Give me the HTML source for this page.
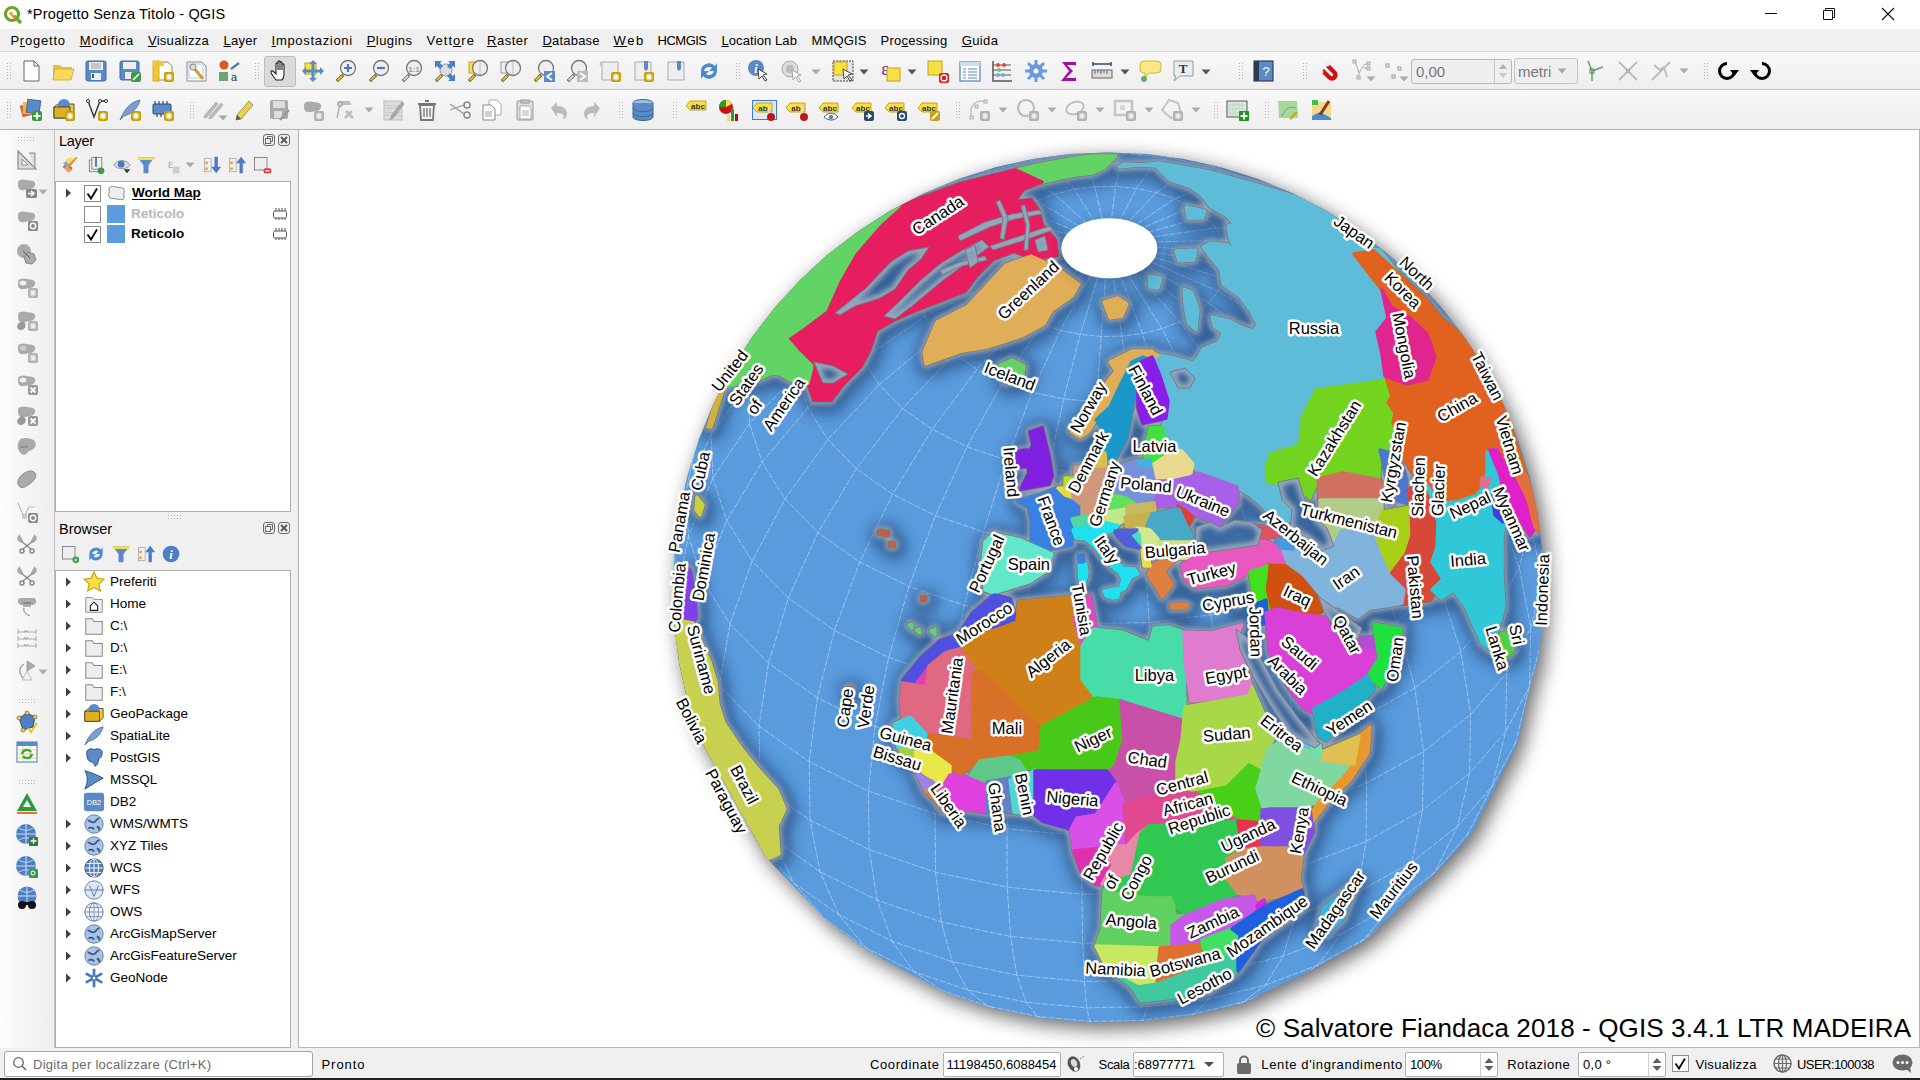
<!DOCTYPE html><html><head><meta charset="utf-8"><title>QGIS</title><style>

*{box-sizing:border-box;margin:0;padding:0}
html,body{width:1920px;height:1080px;overflow:hidden;background:#f0f0f0;font-family:"Liberation Sans", sans-serif;color:#000}
.a{position:absolute}
.t{position:absolute;white-space:nowrap;font-size:13px;line-height:1}
u{text-decoration:underline;text-underline-offset:1px}

</style></head><body>
<div class="a" style="left:0px;top:0px;width:1920px;height:29px;background:#fff"></div><svg class="a" style="left:3px;top:5px" width="20" height="20" viewBox="0 0 20 20"><circle cx="9" cy="9" r="6.5" fill="none" stroke="#6aa52a" stroke-width="3.2"/><path d="M11 11l7 7" stroke="#6aa52a" stroke-width="3.2"/><path d="M7.5 8.5l5 5" stroke="#f08a30" stroke-width="2.2"/><circle cx="8" cy="8.5" r="1.8" fill="#f0a040"/></svg><div class="t" style="left:27px;top:7.3px;font-size:14.5px;;letter-spacing:0.169px">*Progetto Senza Titolo - QGIS</div><div class="a" style="left:1765px;top:13px;width:12px;height:1px;background:#111"></div><svg class="a" style="left:1822px;top:7px" width="14" height="14"><path d="M1.5 3.5h9v9h-9z M3.5 3.5v-2h9v9h-2" fill="none" stroke="#111" stroke-width="1"/></svg><svg class="a" style="left:1881px;top:7px" width="14" height="14"><path d="M1 1l12 12M13 1l-12 12" stroke="#111" stroke-width="1.1"/></svg><div class="a" style="left:0px;top:29px;width:1920px;height:22px;background:#f0f0f0"></div><div class="t" style="left:10.4px;top:33.6px;font-size:13px;;letter-spacing:0.795px">P<u>r</u>ogetto</div><div class="t" style="left:79.7px;top:33.6px;font-size:13px;;letter-spacing:0.745px"><u>M</u>odifica</div><div class="t" style="left:147.9px;top:33.6px;font-size:13px;;letter-spacing:0.294px"><u>V</u>isualizza</div><div class="t" style="left:223.5px;top:33.6px;font-size:13px;;letter-spacing:0.252px"><u>L</u>ayer</div><div class="t" style="left:271.6px;top:33.6px;font-size:13px;;letter-spacing:0.685px"><u>I</u>mpostazioni</div><div class="t" style="left:366.7px;top:33.6px;font-size:13px;;letter-spacing:0.450px"><u>P</u>lugins</div><div class="t" style="left:426.5px;top:33.6px;font-size:13px;;letter-spacing:1.037px">Vett<u>o</u>re</div><div class="t" style="left:487.0px;top:33.6px;font-size:13px;;letter-spacing:0.509px"><u>R</u>aster</div><div class="t" style="left:542.5px;top:33.6px;font-size:13px;;letter-spacing:0.198px"><u>D</u>atabase</div><div class="t" style="left:613.5px;top:33.6px;font-size:13px;;letter-spacing:1.612px"><u>W</u>eb</div><div class="t" style="left:657.5px;top:33.6px;font-size:13px;;letter-spacing:-0.492px">HCMGIS</div><div class="t" style="left:721.4px;top:33.6px;font-size:13px;;letter-spacing:0.097px"><u>L</u>ocation Lab</div><div class="t" style="left:811.5px;top:33.6px;font-size:13px;;letter-spacing:0.154px">MMQGIS</div><div class="t" style="left:880.5px;top:33.6px;font-size:13px;;letter-spacing:0.259px">Pro<u>c</u>essing</div><div class="t" style="left:961.7px;top:33.6px;font-size:13px;;letter-spacing:0.384px"><u>G</u>uida</div><div class="a" style="left:0px;top:51px;width:1920px;height:1px;background:#dadada"></div><div class="a" style="left:0px;top:52px;width:1920px;height:37px;background:linear-gradient(#f8f8f8,#eeeeee)"></div><div class="a" style="left:0px;top:89px;width:1920px;height:1px;background:#c8c8c8"></div><div class="a" style="left:0px;top:90px;width:1920px;height:39px;background:linear-gradient(#f8f8f8,#eeeeee)"></div><div class="a" style="left:0px;top:129px;width:1920px;height:1px;background:#b4b4b4"></div><div class="a" style="left:6px;top:62px;width:5px;height:18px;background-image:radial-gradient(circle,#b4b4b4 0.7px,transparent 0.9px);background-size:3px 3px"></div><svg class="a" style="left:19px;top:59px" width="24" height="24" viewBox="0 0 24 24"><path d="M5 2h10l5 5v15H5z" fill="#fff" stroke="#666" stroke-width="1"/><path d="M15 2v5h5" fill="none" stroke="#666"/></svg><svg class="a" style="left:51px;top:59px" width="24" height="24" viewBox="0 0 24 24"><path d="M2 6h7l2 2h10v12H2z" fill="#e8c040"/><path d="M4 10h19l-3 11H2z" fill="#fad85a" stroke="#d0a830" stroke-width="0.8"/></svg><svg class="a" style="left:84px;top:59px" width="24" height="24" viewBox="0 0 24 24"><rect x="2" y="2" width="20" height="20" rx="2" fill="#5a8ac8" stroke="#3a6aa8"/><rect x="5" y="3" width="14" height="8" fill="#eee"/><path d="M7 5h10M7 7h10M7 9h10" stroke="#888" stroke-width="0.8"/><rect x="7" y="14" width="10" height="7" fill="#eee"/><rect x="8" y="15" width="2" height="4" fill="#3a5a88"/></svg><svg class="a" style="left:118px;top:59px" width="24" height="24" viewBox="0 0 24 24"><rect x="2" y="2" width="19" height="19" rx="2" fill="#5a8ac8" stroke="#3a6aa8"/><rect x="5" y="3" width="13" height="7" fill="#eee"/><rect x="7" y="13" width="9" height="7" fill="#eee"/><rect x="13" y="13" width="10" height="10" rx="2" fill="#3a9a4a"/><path d="M15 21l6-6" stroke="#fff" stroke-width="1.6"/></svg><svg class="a" style="left:151px;top:59px" width="24" height="24" viewBox="0 0 24 24"><path d="M6 3h11l4 4v14H6z" fill="#fff" stroke="#888"/><rect x="2" y="2" width="6" height="20" fill="#f0c830" stroke="#c8a020" stroke-width="0.8"/><rect x="2" y="2" width="11" height="5" fill="#f0c830"/><rect x="13" y="13" width="10" height="10" rx="2" fill="#c8a000"/><path d="M18 14.5v7M14.5 18h7M15.5 15.5l5 5M20.5 15.5l-5 5" stroke="#fff" stroke-width="1.1"/></svg><svg class="a" style="left:184px;top:59px" width="24" height="24" viewBox="0 0 24 24"><path d="M3 3h15l4 4v15H3z" fill="#fff" stroke="#888"/><rect x="5" y="5" width="14" height="14" fill="none" stroke="#aac4f0"/><path d="M9 8l10 12" stroke="#c8a030" stroke-width="3"/><circle cx="9" cy="8" r="3" fill="#ddd" stroke="#888"/></svg><svg class="a" style="left:217px;top:59px" width="24" height="24" viewBox="0 0 24 24"><circle cx="7" cy="6" r="4.5" fill="#d85a20"/><path d="M14 10l8-6" stroke="#4a78b8" stroke-width="2.2"/><rect x="2" y="13" width="9" height="9" fill="#6aa870"/><text x="17" y="22" font-size="11" font-family="Liberation Sans" text-anchor="middle" fill="#333">a</text></svg><div class="a" style="left:254px;top:62px;width:5px;height:18px;background-image:radial-gradient(circle,#b4b4b4 0.7px,transparent 0.9px);background-size:3px 3px"></div><div class="a" style="left:264px;top:56px;width:32px;height:31px;background:#dadada;border:1px solid #bcbcbc;border-radius:3px"></div><svg class="a" style="left:268px;top:59px" width="24" height="24" viewBox="0 0 24 24"><path d="M8 21c-2-3-5-6-5-8s2-1 3 0l2 2V5c0-1.5 2-1.5 2 0v6V3c0-1.5 2-1.5 2 0v8V4c0-1.5 2-1.5 2 0v7V6c0-1.5 2-1.5 2 0v9c0 3-1 5-2 6z" fill="#fff" stroke="#222" stroke-width="1.1"/></svg><svg class="a" style="left:301px;top:59px" width="24" height="24" viewBox="0 0 24 24"><rect x="4" y="4" width="11" height="11" fill="#f8e040" stroke="#c8a020"/><path d="M12 1l-4 4h8zM12 23l-4-4h8zM1 12l4-4v8zM23 12l-4-4v8z" fill="#5a8ac8"/><path d="M12 4v16M4 12h16" stroke="#5a8ac8" stroke-width="3"/></svg><svg class="a" style="left:334px;top:59px" width="24" height="24" viewBox="0 0 24 24"><path d="M3 22l6-6" stroke="#222" stroke-width="3"/><path d="M3.5 21.5l5-5" stroke="#f0c020" stroke-width="2"/><circle cx="14" cy="9" r="7.5" fill="#eee" stroke="#777" stroke-width="1.3"/><path d="M14 5v8M10 9h8" stroke="#4a78c8" stroke-width="2.2"/></svg><svg class="a" style="left:367px;top:59px" width="24" height="24" viewBox="0 0 24 24"><path d="M3 22l6-6" stroke="#222" stroke-width="3"/><path d="M3.5 21.5l5-5" stroke="#f0c020" stroke-width="2"/><circle cx="14" cy="9" r="7.5" fill="#eee" stroke="#777" stroke-width="1.3"/><path d="M10 9h8" stroke="#4a78c8" stroke-width="2.2"/></svg><svg class="a" style="left:400px;top:59px" width="24" height="24" viewBox="0 0 24 24"><path d="M3 22l6-6" stroke="#222" stroke-width="3"/><path d="M3.5 21.5l5-5" stroke="#ddd" stroke-width="2"/><circle cx="14" cy="9" r="7.5" fill="#eee" stroke="#777" stroke-width="1.3"/><text x="14" y="12.5" font-size="8" font-weight="bold" font-family="Liberation Sans" text-anchor="middle" fill="#999">1:1</text></svg><svg class="a" style="left:433px;top:59px" width="24" height="24" viewBox="0 0 24 24"><path d="M3 22l6-6" stroke="#222" stroke-width="3"/><path d="M3.5 21.5l5-5" stroke="#f0c020" stroke-width="2"/><circle cx="13" cy="11" r="6" fill="#ddd" stroke="#999"/><path d="M2 2h7l-2 2 3 3-3 3-3-3-2 2zM22 2v7l-2-2-3 3-3-3 3-3-2-2zM22 22h-7l2-2-3-3 3-3 3 3 2-2z" fill="#4a80c8"/></svg><svg class="a" style="left:466px;top:59px" width="24" height="24" viewBox="0 0 24 24"><rect x="3" y="3" width="9" height="11" fill="#f8e040" stroke="#c8a020"/><path d="M3 22l6-6" stroke="#222" stroke-width="3"/><path d="M3.5 21.5l5-5" stroke="#f0c020" stroke-width="2"/><circle cx="14" cy="9" r="7.5" fill="#eee" stroke="#777" stroke-width="1.3"/><path d="M14 2v14" stroke="#bbb"/></svg><svg class="a" style="left:499px;top:59px" width="24" height="24" viewBox="0 0 24 24"><rect x="2" y="3" width="8" height="11" fill="#eee" stroke="#999"/><path d="M3 22l6-6" stroke="#222" stroke-width="3"/><path d="M3.5 21.5l5-5" stroke="#f0c020" stroke-width="2"/><circle cx="14" cy="9" r="7.5" fill="#eee" stroke="#777" stroke-width="1.3"/><path d="M14 2v14" stroke="#bbb"/></svg><svg class="a" style="left:532px;top:59px" width="24" height="24" viewBox="0 0 24 24"><path d="M3 22l6-6" stroke="#222" stroke-width="3"/><path d="M3.5 21.5l5-5" stroke="#f0c020" stroke-width="2"/><circle cx="14" cy="9" r="7.5" fill="#eee" stroke="#777" stroke-width="1.3"/><rect x="12" y="12" width="11" height="11" fill="#5a8ac8"/><path d="M20 14l-5 3.5 5 3.5" fill="none" stroke="#fff" stroke-width="1.8"/></svg><svg class="a" style="left:565px;top:59px" width="24" height="24" viewBox="0 0 24 24"><path d="M3 22l6-6" stroke="#222" stroke-width="3"/><path d="M3.5 21.5l5-5" stroke="#ddd" stroke-width="2"/><circle cx="14" cy="9" r="7.5" fill="#eee" stroke="#777" stroke-width="1.3"/><rect x="12" y="12" width="11" height="11" fill="#bbb"/><path d="M15 14l5 3.5-5 3.5" fill="none" stroke="#fff" stroke-width="1.8"/></svg><svg class="a" style="left:598px;top:59px" width="24" height="24" viewBox="0 0 24 24"><path d="M4 3h16v18H4z" fill="#eee" stroke="#aaa"/><path d="M4 3a2 2 0 0 0 0 4" fill="#ddd" stroke="#aaa"/><rect x="13" y="13" width="10" height="10" rx="2" fill="#c8a000"/><path d="M18 14.5v7M14.5 18h7M15.5 15.5l5 5M20.5 15.5l-5 5" stroke="#fff" stroke-width="1.1"/></svg><svg class="a" style="left:631px;top:59px" width="24" height="24" viewBox="0 0 24 24"><path d="M4 3h16v18H4z" fill="#eee" stroke="#aaa"/><path d="M13 2h4v8l-2 2-2-2z" fill="#5a8ac8"/><rect x="13" y="13" width="10" height="10" rx="2" fill="#c8a000"/><path d="M18 14.5v7M14.5 18h7M15.5 15.5l5 5M20.5 15.5l-5 5" stroke="#fff" stroke-width="1.1"/></svg><svg class="a" style="left:664px;top:59px" width="24" height="24" viewBox="0 0 24 24"><path d="M4 3h16v18H4z" fill="#eee" stroke="#aaa"/><path d="M13 2h4v8l-2 2-2-2z" fill="#5a8ac8"/></svg><svg class="a" style="left:697px;top:59px" width="24" height="24" viewBox="0 0 24 24"><path d="M4 12a8 8 0 0 1 14-5l2-3v8h-8l3-3a5 5 0 0 0-8 3z M20 12a8 8 0 0 1-14 5l-2 3v-8h8l-3 3a5 5 0 0 0 8-3z" fill="#4a8ad0"/></svg><div class="a" style="left:735px;top:62px;width:5px;height:18px;background-image:radial-gradient(circle,#b4b4b4 0.7px,transparent 0.9px);background-size:3px 3px"></div><svg class="a" style="left:747px;top:59px" width="24" height="24" viewBox="0 0 24 24"><circle cx="9" cy="9" r="8" fill="#5a8ac8"/><text x="9" y="14" font-size="12" font-style="italic" font-weight="bold" font-family="Liberation Serif" text-anchor="middle" fill="#fff">i</text><path d="M11 10l9 5-4 1 4 5-2 1-3-5-3 3z" fill="#fff" stroke="#333" stroke-width="0.9"/></svg><svg class="a" style="left:780px;top:59px" width="24" height="24" viewBox="0 0 24 24"><circle cx="10" cy="10" r="8" fill="#ddd" stroke="#aaa"/><circle cx="10" cy="10" r="4" fill="#bbb"/><path d="M12 11l9 5-4 1 4 5-2 1-3-5-3 3z" fill="#fff" stroke="#999" stroke-width="0.9"/></svg><svg class="a" style="left:831px;top:59px" width="24" height="24" viewBox="0 0 24 24"><rect x="2" y="2" width="20" height="20" fill="#e4e4e4" stroke="#333" stroke-dasharray="2 1.2"/><rect x="3" y="3" width="13" height="13" fill="#f8e040" stroke="#c8a020"/><path d="M12 10l9 5-4 1 4 5-2 1-3-5-3 3z" fill="#fff" stroke="#333" stroke-width="0.9"/></svg><svg class="a" style="left:878px;top:59px" width="24" height="24" viewBox="0 0 24 24"><text x="7" y="16" font-size="18" font-family="Liberation Serif" text-anchor="middle" fill="#6a2a8a">&#949;</text><rect x="9" y="9" width="13" height="13" fill="#f8e040" stroke="#c8a020"/></svg><svg class="a" style="left:925px;top:59px" width="24" height="24" viewBox="0 0 24 24"><rect x="3" y="2" width="14" height="14" fill="#f8e040" stroke="#c8a020"/><rect x="14" y="14" width="10" height="10" rx="2" fill="#d82020"/><circle cx="19" cy="19" r="3" fill="none" stroke="#fff" stroke-width="1.3"/></svg><svg class="a" style="left:958px;top:59px" width="24" height="24" viewBox="0 0 24 24"><rect x="2" y="3" width="20" height="19" fill="#fff" stroke="#5a8ac8" stroke-width="1.3"/><rect x="2" y="3" width="20" height="4" fill="#cde"/><path d="M5 10h3M10 10h9M5 13h3M10 13h9M5 16h3M10 16h9M5 19h3M10 19h9" stroke="#5a8ac8" stroke-width="1.2"/></svg><svg class="a" style="left:990px;top:59px" width="24" height="24" viewBox="0 0 24 24"><path d="M3 2v20h19" fill="none" stroke="#555" stroke-width="1.5"/><path d="M3 6h18M3 11h18M3 16h18" stroke="#555"/><circle cx="8" cy="6" r="2" fill="#e44"/><circle cx="14" cy="6" r="2" fill="#e44"/><circle cx="9" cy="11" r="2" fill="#6c6"/><circle cx="8" cy="16" r="2" fill="#6ae"/><circle cx="13" cy="16" r="2" fill="#6ae"/></svg><svg class="a" style="left:1024px;top:59px" width="24" height="24" viewBox="0 0 24 24"><circle cx="12" cy="12" r="7" fill="#6a9ae0"/><path d="M12 1v22M1 12h22M4 4l16 16M20 4L4 20" stroke="#6a9ae0" stroke-width="3"/><circle cx="12" cy="12" r="2.5" fill="#fff"/></svg><svg class="a" style="left:1057px;top:59px" width="24" height="24" viewBox="0 0 24 24"><path d="M5 3h14v4l-1-1H10l6 6-7 7h9l1-1v4H4l8-10z" fill="#a010a0"/></svg><svg class="a" style="left:1090px;top:59px" width="24" height="24" viewBox="0 0 24 24"><path d="M3 5h18M3 3v4M21 3v4" stroke="#2a4a7a" stroke-width="1.5"/><rect x="2" y="11" width="20" height="8" fill="#ddd" stroke="#666"/><path d="M5 11v4M8 11v3M11 11v4M14 11v3M17 11v4" stroke="#666"/></svg><svg class="a" style="left:1138px;top:59px" width="24" height="24" viewBox="0 0 24 24"><path d="M2 6a4 4 0 0 1 4-4h13a4 4 0 0 1 4 4v4a4 4 0 0 1-4 4h-8l-4 5v-5H6a4 4 0 0 1-4-4z" fill="#fae888" stroke="#d0b830"/><circle cx="6" cy="20" r="3" fill="#6aa870"/></svg><svg class="a" style="left:1171px;top:59px" width="24" height="24" viewBox="0 0 24 24"><path d="M3 2h19v15H9l-6 5 2-5H3z" fill="#e8eef4" stroke="#999"/><text x="12" y="14" font-size="13" font-weight="bold" font-family="Liberation Serif" text-anchor="middle" fill="#333">T</text></svg><svg class="a" style="left:811px;top:69px" width="10" height="6"><path d="M0.5 0.5h9l-4.5 5z" fill="#aaa"/></svg><svg class="a" style="left:859px;top:69px" width="10" height="6"><path d="M0.5 0.5h9l-4.5 5z" fill="#555"/></svg><svg class="a" style="left:907px;top:69px" width="10" height="6"><path d="M0.5 0.5h9l-4.5 5z" fill="#555"/></svg><svg class="a" style="left:1120px;top:69px" width="10" height="6"><path d="M0.5 0.5h9l-4.5 5z" fill="#555"/></svg><svg class="a" style="left:1201px;top:69px" width="10" height="6"><path d="M0.5 0.5h9l-4.5 5z" fill="#555"/></svg><div class="a" style="left:1238px;top:62px;width:5px;height:18px;background-image:radial-gradient(circle,#b4b4b4 0.7px,transparent 0.9px);background-size:3px 3px"></div><svg class="a" style="left:1251px;top:59px" width="24" height="24" viewBox="0 0 24 24"><rect x="3" y="2" width="19" height="20" fill="#5a8ac8" stroke="#223"/><rect x="3" y="2" width="5" height="20" fill="#2a3a4a"/><text x="15" y="17" font-size="13" font-family="Liberation Sans" text-anchor="middle" fill="#fff">?</text></svg><div class="a" style="left:1302px;top:62px;width:5px;height:18px;background-image:radial-gradient(circle,#b4b4b4 0.7px,transparent 0.9px);background-size:3px 3px"></div><svg class="a" style="left:1316px;top:59px" width="24" height="24" viewBox="0 0 24 24"><path d="M5 13l7 7a5 5 0 0 0 8-8l-7-7-3 3 7 7a1.5 1.5 0 0 1-2 2l-7-7z" fill="#d01010"/><rect x="3" y="11" width="4" height="4" fill="#eee" transform="rotate(45 5 13)"/><rect x="10" y="3" width="4" height="4" fill="#eee" transform="rotate(45 12 5)"/></svg><svg class="a" style="left:1350px;top:58px" width="24" height="24" viewBox="0 0 24 24"><path d="M5 3l4 12 5-8M9 15v4M14 7l4-2M14 10h4" stroke="#bbb" stroke-width="1.3" fill="none"/><rect x="3" y="2" width="3" height="3" fill="#ddd" stroke="#aaa"/><rect x="17" y="4" width="3" height="3" fill="#ddd" stroke="#aaa"/><rect x="17" y="9" width="3" height="3" fill="#ddd" stroke="#aaa"/><rect x="7" y="18" width="3" height="3" fill="#ddd" stroke="#aaa"/></svg><svg class="a" style="left:1366px;top:76px" width="10" height="6"><path d="M0.5 0.5h9l-4.5 5z" fill="#aaa"/></svg><svg class="a" style="left:1382px;top:59px" width="24" height="24" viewBox="0 0 24 24"><rect x="4" y="5" width="3" height="3" fill="none" stroke="#999"/><rect x="16" y="8" width="3" height="3" fill="none" stroke="#999"/><rect x="10" y="16" width="3" height="3" fill="none" stroke="#999"/></svg><svg class="a" style="left:1399px;top:76px" width="10" height="6"><path d="M0.5 0.5h9l-4.5 5z" fill="#aaa"/></svg><div class="a" style="left:1411px;top:59px;width:101px;height:25px;background:#efefef;border:1px solid #b8b8b8;border-radius:3px"></div><div class="t" style="left:1416px;top:64.0px;font-size:15px;color:#777">0,00</div><div class="a" style="left:1494px;top:60px;width:1px;height:23px;background:#c8c8c8"></div><svg class="a" style="left:1497px;top:61px" width="12" height="20"><path d="M2 8l4-5 4 5z" fill="#b0b0b0"/><path d="M2 12l4 5 4-5z" fill="#c8c8c8"/></svg><div class="a" style="left:1514px;top:58px;width:64px;height:26px;background:#efefef;border:1px solid #c4c4c4;border-radius:3px"></div><div class="t" style="left:1518px;top:64.0px;font-size:15px;color:#777">metri</div><svg class="a" style="left:1557px;top:68px" width="10" height="6"><path d="M0.5 0.5h9l-4.5 5z" fill="#aaa"/></svg><svg class="a" style="left:1583px;top:59px" width="24" height="24" viewBox="0 0 24 24"><path d="M5 2l4 10v10M9 12l11-4" stroke="#5ab060" stroke-width="1.6" fill="none"/><rect x="7" y="10" width="4" height="4" fill="none" stroke="#777"/></svg><svg class="a" style="left:1616px;top:59px" width="24" height="24" viewBox="0 0 24 24"><path d="M3 3l18 18M21 3L3 21" stroke="#bbb" stroke-width="1.8"/><rect x="10.5" y="10.5" width="3" height="3" fill="none" stroke="#aaa"/></svg><svg class="a" style="left:1649px;top:59px" width="24" height="24" viewBox="0 0 24 24"><path d="M3 21L21 3M5 6l6 5 4-3 3 10" stroke="#bbb" stroke-width="1.8" fill="none"/></svg><svg class="a" style="left:1679px;top:68px" width="10" height="6"><path d="M0.5 0.5h9l-4.5 5z" fill="#aaa"/></svg><div class="a" style="left:1703px;top:62px;width:5px;height:18px;background-image:radial-gradient(circle,#b4b4b4 0.7px,transparent 0.9px);background-size:3px 3px"></div><svg class="a" style="left:1715px;top:59px" width="24" height="24" viewBox="0 0 24 24"><path d="M12 4.5A7.5 7.5 0 1 0 19.5 12" fill="none" stroke="#000" stroke-width="3"/><path d="M15 11h9l-4.5 6z" fill="#000"/></svg><svg class="a" style="left:1750px;top:59px" width="24" height="24" viewBox="0 0 24 24"><path d="M12 4.5A7.5 7.5 0 1 1 4.5 12" fill="none" stroke="#000" stroke-width="3"/><path d="M0 11h9l-4.5 6z" fill="#000"/></svg><div class="a" style="left:6px;top:101px;width:5px;height:18px;background-image:radial-gradient(circle,#b4b4b4 0.7px,transparent 0.9px);background-size:3px 3px"></div><svg class="a" style="left:19px;top:98px" width="24" height="24" viewBox="0 0 24 24"><rect x="2" y="6" width="12" height="12" fill="#e06030" transform="rotate(-15 8 12)"/><rect x="4" y="4" width="12" height="12" fill="#f0c030"/><rect x="8" y="2" width="13" height="13" fill="#5a8ac8" stroke="#3a6aa8" transform="rotate(8 14 8)"/><rect x="13" y="13" width="10" height="10" rx="2" fill="#3a9a3a"/><path d="M18 14.5v7M14.5 18h7" stroke="#fff" stroke-width="2"/></svg><svg class="a" style="left:52px;top:98px" width="24" height="24" viewBox="0 0 24 24"><path d="M2 9l4-3h16v10l-4 4H2z" fill="#f0c830" stroke="#333" stroke-width="0.8"/><circle cx="12" cy="7" r="6" fill="#5a8ac8"/><path d="M2 9h16v11H2z" fill="#e0b020" stroke="#333" stroke-width="0.8"/><rect x="13" y="13" width="10" height="10" rx="2" fill="#c8a000"/><path d="M18 14.5v7M14.5 18h7M15.5 15.5l5 5M20.5 15.5l-5 5" stroke="#fff" stroke-width="1.1"/></svg><svg class="a" style="left:85px;top:98px" width="24" height="24" viewBox="0 0 24 24"><path d="M3 3l6 16 6-16h6" fill="none" stroke="#223a4a" stroke-width="1.4"/><circle cx="3" cy="3" r="1.5" fill="#fff" stroke="#333"/><circle cx="15" cy="3" r="1.5" fill="#fff" stroke="#333"/><circle cx="21" cy="3" r="1.5" fill="#fff" stroke="#333"/><rect x="13" y="13" width="10" height="10" rx="2" fill="#c8a000"/><path d="M18 14.5v7M14.5 18h7M15.5 15.5l5 5M20.5 15.5l-5 5" stroke="#fff" stroke-width="1.1"/></svg><svg class="a" style="left:118px;top:98px" width="24" height="24" viewBox="0 0 24 24"><path d="M2 22C6 12 12 4 22 2c-2 8-8 14-16 16z" fill="#7aa0d0" stroke="#4a6a90" stroke-width="0.8"/><rect x="13" y="13" width="10" height="10" rx="2" fill="#c8a000"/><path d="M18 14.5v7M14.5 18h7M15.5 15.5l5 5M20.5 15.5l-5 5" stroke="#fff" stroke-width="1.1"/></svg><svg class="a" style="left:151px;top:98px" width="24" height="24" viewBox="0 0 24 24"><rect x="2" y="6" width="18" height="10" rx="1" fill="#5a8ac8" stroke="#2a4a78"/><path d="M4 3v3M8 3v3M12 3v3M16 3v3M6 16v3M10 16v3M14 16v3" stroke="#2a4a78" stroke-width="1.2"/><rect x="13" y="13" width="10" height="10" rx="2" fill="#c8a000"/><path d="M18 14.5v7M14.5 18h7M15.5 15.5l5 5M20.5 15.5l-5 5" stroke="#fff" stroke-width="1.1"/></svg><div class="a" style="left:189px;top:101px;width:5px;height:18px;background-image:radial-gradient(circle,#b4b4b4 0.7px,transparent 0.9px);background-size:3px 3px"></div><svg class="a" style="left:201px;top:98px" width="24" height="24" viewBox="0 0 24 24"><path d="M3 20l3-1 11-13-2-2L4 17zM8 21l3-1 11-13-2-2L9 18z" fill="#bbb" stroke="#999" stroke-width="0.6"/></svg><svg class="a" style="left:218px;top:115px" width="10" height="6"><path d="M0.5 0.5h9l-4.5 5z" fill="#aaa"/></svg><svg class="a" style="left:233px;top:98px" width="24" height="24" viewBox="0 0 24 24"><path d="M3 22l1-5L16 3l4 4L8 21z" fill="#f0d040" stroke="#777" stroke-width="0.8"/><path d="M3 22l1-5 4 4z" fill="#555"/></svg><svg class="a" style="left:268px;top:98px" width="24" height="24" viewBox="0 0 24 24"><rect x="2" y="2" width="18" height="19" rx="2" fill="#aaa"/><rect x="5" y="3" width="12" height="7" fill="#ddd"/><rect x="6" y="13" width="8" height="7" fill="#ddd"/><path d="M12 22l9-10" stroke="#999" stroke-width="2.5"/></svg><svg class="a" style="left:301px;top:98px" width="24" height="24" viewBox="0 0 24 24"><path d="M3 7c0-4 6-4 9-3s7 0 8 3-2 6-5 6-6 2-9 1-3-4-3-7z" fill="#aaa"/><rect x="13" y="13" width="10" height="10" rx="2" fill="#b0b0b0"/><path d="M18 14.5v7M14.5 18h7M15.5 15.5l5 5M20.5 15.5l-5 5" stroke="#eee" stroke-width="1.1"/></svg><svg class="a" style="left:333px;top:98px" width="24" height="24" viewBox="0 0 24 24"><path d="M4 20l3-14M8 6h10M7 4h10" stroke="#aaa" stroke-width="1.3"/><circle cx="7" cy="6" r="2.5" fill="#ccc" stroke="#999"/><path d="M12 20l7-7M13 13l7 7" stroke="#bbb" stroke-width="2.5"/></svg><svg class="a" style="left:382px;top:98px" width="24" height="24" viewBox="0 0 24 24"><rect x="2" y="3" width="18" height="5" fill="#ddd" stroke="#bbb"/><rect x="2" y="10" width="18" height="5" fill="#ddd" stroke="#bbb"/><rect x="2" y="17" width="18" height="5" fill="#ddd" stroke="#bbb"/><path d="M8 22l2-5 10-13 2 2-10 13z" fill="#aaa" stroke="#888" stroke-width="0.6"/></svg><svg class="a" style="left:415px;top:98px" width="24" height="24" viewBox="0 0 24 24"><path d="M5 7h14l-1 15H6z" fill="none" stroke="#777" stroke-width="1.8"/><path d="M3 6h18M10 3h4" stroke="#777" stroke-width="1.8"/><path d="M9 10v9M12 10v9M15 10v9" stroke="#777" stroke-width="1.3"/></svg><svg class="a" style="left:448px;top:98px" width="24" height="24" viewBox="0 0 24 24"><path d="M2 6l14 10M2 12l14-5" stroke="#999" stroke-width="1.3"/><circle cx="19" cy="7" r="3" fill="none" stroke="#888" stroke-width="1.5"/><circle cx="19" cy="17" r="3" fill="none" stroke="#888" stroke-width="1.5"/></svg><svg class="a" style="left:480px;top:98px" width="24" height="24" viewBox="0 0 24 24"><path d="M9 2h8l4 4v11H9z" fill="#fff" stroke="#aaa"/><path d="M3 7h8l4 4v11H3z" fill="#fff" stroke="#888"/><path d="M5 14h7M5 16h7M5 18h7" stroke="#888" stroke-width="0.8"/></svg><svg class="a" style="left:514px;top:98px" width="24" height="24" viewBox="0 0 24 24"><rect x="3" y="3" width="16" height="19" rx="1" fill="#ddd" stroke="#999"/><rect x="7" y="2" width="8" height="3" fill="#ccc" stroke="#999"/><path d="M6 8h9l2 2v11H6z" fill="#fff" stroke="#999" stroke-width="0.8"/><path d="M8 13h7M8 15h7M8 17h7" stroke="#999" stroke-width="0.8"/></svg><svg class="a" style="left:547px;top:98px" width="24" height="24" viewBox="0 0 24 24"><path d="M4 10l6-6v4c6 0 10 3 10 8 0 3-2 5-4 5 1-2 2-6-6-6v4z" fill="#bbb"/></svg><svg class="a" style="left:580px;top:98px" width="24" height="24" viewBox="0 0 24 24"><path d="M20 10l-6-6v4C8 8 4 11 4 16c0 3 2 5 4 5-1-2-2-6 6-6v4z" fill="#bbb"/></svg><svg class="a" style="left:364px;top:107px" width="10" height="6"><path d="M0.5 0.5h9l-4.5 5z" fill="#aaa"/></svg><div class="a" style="left:618px;top:101px;width:5px;height:18px;background-image:radial-gradient(circle,#b4b4b4 0.7px,transparent 0.9px);background-size:3px 3px"></div><svg class="a" style="left:631px;top:98px" width="24" height="24" viewBox="0 0 24 24"><ellipse cx="12" cy="5" rx="10" ry="3.5" fill="#9ac0e8" stroke="#3a6a9a"/><path d="M2 5v14c0 2 4.5 3.5 10 3.5s10-1.5 10-3.5V5" fill="#5a8ac8" stroke="#3a6a9a"/><path d="M2 10c0 2 4.5 3.5 10 3.5s10-1.5 10-3.5M2 15c0 2 4.5 3.5 10 3.5s10-1.5 10-3.5" fill="none" stroke="#3a6a9a"/></svg><div class="a" style="left:672px;top:101px;width:5px;height:18px;background-image:radial-gradient(circle,#b4b4b4 0.7px,transparent 0.9px);background-size:3px 3px"></div><svg class="a" style="left:685px;top:96px" width="24" height="24" viewBox="0 0 24 24"><path d="M1 10l4-5h16v9H5z" fill="#f8e040" stroke="#c8a020"/><text x="13" y="13" font-size="8" font-weight="bold" font-family="Liberation Sans" text-anchor="middle" fill="#333">abc</text></svg><svg class="a" style="left:718px;top:98px" width="24" height="24" viewBox="0 0 24 24"><circle cx="8" cy="9" r="7" fill="#d01010"/><path d="M8 9V2a7 7 0 0 0-7 7z" fill="#28a028"/><path d="M8 9V2a7 7 0 0 1 6 4z" fill="#f8e040"/><rect x="9" y="17" width="3" height="6" fill="#f8e040"/><rect x="13" y="11" width="3" height="12" fill="#28a028"/><rect x="17" y="16" width="3" height="7" fill="#b01010"/></svg><div class="a" style="left:752px;top:100px;width:25px;height:20px;background:#dce8f6;border:1.5px solid #3a7ad8"></div><svg class="a" style="left:752px;top:98px" width="24" height="24" viewBox="0 0 24 24"><path d="M1 10l4-5h15v9H5z" fill="#f8e040" stroke="#c8a020"/><text x="11" y="13" font-size="8" font-weight="bold" font-family="Liberation Sans" text-anchor="middle" fill="#333">ab</text><path d="M17 8v8" stroke="#ddd" stroke-width="2"/><circle cx="19" cy="19" r="4" fill="#c01818"/></svg><svg class="a" style="left:785px;top:98px" width="24" height="24" viewBox="0 0 24 24"><path d="M1 10l4-5h15v9H5z" fill="#f8e040" stroke="#c8a020"/><text x="11" y="13" font-size="8" font-weight="bold" font-family="Liberation Sans" text-anchor="middle" fill="#333">ab</text><path d="M17 8v8" stroke="#ddd" stroke-width="2"/><circle cx="19" cy="19" r="4" fill="#c01818"/></svg><svg class="a" style="left:818px;top:98px" width="24" height="24" viewBox="0 0 24 24"><path d="M1 10l4-5h15v9H5z" fill="#f8e040" stroke="#c8a020"/><text x="12" y="13" font-size="8" font-weight="bold" font-family="Liberation Sans" text-anchor="middle" fill="#333">abc</text><path d="M6 19c4-5 10-5 14 0-4 4-10 4-14 0z" fill="#fff" stroke="#333" stroke-width="0.8"/><circle cx="13" cy="19" r="2.2" fill="#4a8ad0"/></svg><svg class="a" style="left:851px;top:98px" width="24" height="24" viewBox="0 0 24 24"><path d="M1 10l4-5h15v9H5z" fill="#f8e040" stroke="#c8a020"/><text x="12" y="13" font-size="8" font-weight="bold" font-family="Liberation Sans" text-anchor="middle" fill="#333">abc</text><rect x="13" y="13" width="10" height="10" rx="2" fill="#2a4a68"/><path d="M15 18h4M17 15.5l3 2.5-3 2.5" fill="none" stroke="#fff" stroke-width="1.6"/></svg><svg class="a" style="left:884px;top:98px" width="24" height="24" viewBox="0 0 24 24"><path d="M1 10l4-5h15v9H5z" fill="#f8e040" stroke="#c8a020"/><text x="12" y="13" font-size="8" font-weight="bold" font-family="Liberation Sans" text-anchor="middle" fill="#333">abc</text><rect x="13" y="13" width="10" height="10" rx="2" fill="#2a4a68"/><circle cx="18" cy="18" r="2.5" fill="none" stroke="#fff" stroke-width="1.3"/></svg><svg class="a" style="left:917px;top:98px" width="24" height="24" viewBox="0 0 24 24"><path d="M1 10l4-5h15v9H5z" fill="#f8e040" stroke="#c8a020"/><text x="12" y="13" font-size="8" font-weight="bold" font-family="Liberation Sans" text-anchor="middle" fill="#333">abc</text><rect x="13" y="13" width="10" height="10" rx="2" fill="#c8a020"/><path d="M15 21l6-6" stroke="#fff" stroke-width="1.8"/></svg><div class="a" style="left:955px;top:101px;width:5px;height:18px;background-image:radial-gradient(circle,#b4b4b4 0.7px,transparent 0.9px);background-size:3px 3px"></div><svg class="a" style="left:967px;top:98px" width="24" height="24" viewBox="0 0 24 24"><path d="M4 20v-8a10 10 0 0 1 14-8" fill="none" stroke="#bbb" stroke-width="1.3"/><rect x="3" y="18" width="3" height="3" fill="#eee" stroke="#aaa"/><rect x="8" y="7" width="3" height="3" fill="#eee" stroke="#aaa"/><rect x="17" y="2" width="3" height="3" fill="#eee" stroke="#aaa"/><rect x="13" y="13" width="10" height="10" rx="2" fill="#b0b0b0"/><path d="M18 14.5v7M14.5 18h7M15.5 15.5l5 5M20.5 15.5l-5 5" stroke="#eee" stroke-width="1.1"/></svg><svg class="a" style="left:998px;top:107px" width="10" height="6"><path d="M0.5 0.5h9l-4.5 5z" fill="#aaa"/></svg><svg class="a" style="left:1016px;top:98px" width="24" height="24" viewBox="0 0 24 24"><circle cx="10" cy="10" r="8" fill="none" stroke="#bbb" stroke-width="2.2"/><rect x="13" y="13" width="10" height="10" rx="2" fill="#b0b0b0"/><path d="M18 14.5v7M14.5 18h7M15.5 15.5l5 5M20.5 15.5l-5 5" stroke="#eee" stroke-width="1.1"/></svg><svg class="a" style="left:1047px;top:107px" width="10" height="6"><path d="M0.5 0.5h9l-4.5 5z" fill="#aaa"/></svg><svg class="a" style="left:1064px;top:98px" width="24" height="24" viewBox="0 0 24 24"><ellipse cx="11" cy="10" rx="9" ry="6" fill="none" stroke="#bbb" stroke-width="1.8" transform="rotate(-20 11 10)"/><rect x="13" y="13" width="10" height="10" rx="2" fill="#b0b0b0"/><path d="M18 14.5v7M14.5 18h7M15.5 15.5l5 5M20.5 15.5l-5 5" stroke="#eee" stroke-width="1.1"/></svg><svg class="a" style="left:1095px;top:107px" width="10" height="6"><path d="M0.5 0.5h9l-4.5 5z" fill="#aaa"/></svg><svg class="a" style="left:1113px;top:98px" width="24" height="24" viewBox="0 0 24 24"><rect x="2" y="3" width="17" height="14" fill="none" stroke="#c4c4c4" stroke-width="2.5"/><rect x="8" y="8" width="3" height="3" fill="none" stroke="#bbb"/><rect x="13" y="13" width="10" height="10" rx="2" fill="#b0b0b0"/><path d="M18 14.5v7M14.5 18h7M15.5 15.5l5 5M20.5 15.5l-5 5" stroke="#eee" stroke-width="1.1"/></svg><svg class="a" style="left:1144px;top:107px" width="10" height="6"><path d="M0.5 0.5h9l-4.5 5z" fill="#aaa"/></svg><svg class="a" style="left:1160px;top:98px" width="24" height="24" viewBox="0 0 24 24"><path d="M9 2l9 3 3 10-10 5-9-8z" fill="none" stroke="#c4c4c4" stroke-width="2"/><rect x="13" y="13" width="10" height="10" rx="2" fill="#b0b0b0"/><path d="M18 14.5v7M14.5 18h7M15.5 15.5l5 5M20.5 15.5l-5 5" stroke="#eee" stroke-width="1.1"/></svg><svg class="a" style="left:1191px;top:107px" width="10" height="6"><path d="M0.5 0.5h9l-4.5 5z" fill="#aaa"/></svg><div class="a" style="left:1213px;top:101px;width:5px;height:18px;background-image:radial-gradient(circle,#b4b4b4 0.7px,transparent 0.9px);background-size:3px 3px"></div><svg class="a" style="left:1226px;top:98px" width="24" height="24" viewBox="0 0 24 24"><rect x="1" y="3" width="20" height="16" fill="#d8ecd8" stroke="#555"/><path d="M4 3v16M7 3v16M10 3v16M13 3v16M16 3v16M1 7h20M1 11h20M1 15h20" stroke="#aac8c8" stroke-width="0.5"/><rect x="13" y="13" width="10" height="10" rx="1" fill="#1a9a1a"/><path d="M18 14.5v7M14.5 18h7" stroke="#fff" stroke-width="2"/></svg><div class="a" style="left:1264px;top:101px;width:5px;height:18px;background-image:radial-gradient(circle,#b4b4b4 0.7px,transparent 0.9px);background-size:3px 3px"></div><svg class="a" style="left:1276px;top:98px" width="24" height="24" viewBox="0 0 24 24"><path d="M2 3h19l1 17H3z" fill="#a8d898"/><path d="M6 18c4-8 8-10 14-8" stroke="#6a9ad8" fill="none"/><path d="M14 21l7-7" stroke="#c8b018" stroke-width="2.5"/></svg><svg class="a" style="left:1310px;top:98px" width="24" height="24" viewBox="0 0 24 24"><path d="M2 4h19v18H2z" fill="#f0d890"/><path d="M2 18l8-4 11 6v2H2z" fill="#4a8ad0"/><rect x="2" y="2" width="6" height="5" fill="#4aba4a"/><path d="M10 17l9-14" stroke="#8a3a10" stroke-width="3"/></svg><div class="a" style="left:0px;top:130px;width:54px;height:918px;background:linear-gradient(90deg,#fcfcfc,#eeeeee)"></div><div class="a" style="left:54px;top:130px;width:1px;height:918px;background:#c0c0c0"></div><div class="a" style="left:55px;top:130px;width:243px;height:918px;background:#f0f0f0"></div><div class="a" style="left:298px;top:130px;width:1px;height:918px;background:#b4b4b4"></div><div class="t" style="left:59px;top:133.7px;font-size:14.5px;;letter-spacing:-0.280px">Layer</div><div class="a" style="left:55px;top:181px;width:236px;height:331px;background:#fff;border:1px solid #adadad"></div><div class="t" style="left:59px;top:522.2px;font-size:14.5px;;letter-spacing:-0.005px">Browser</div><div class="a" style="left:55px;top:570px;width:236px;height:478px;background:#fff;border:1px solid #adadad"></div><div class="a" style="left:17px;top:136px;width:18px;height:5px;background-image:radial-gradient(circle,#b4b4b4 0.7px,transparent 0.9px);background-size:3px 3px"></div><svg class="a" style="left:15px;top:148px" width="24" height="24" viewBox="0 0 24 24"><path d="M3 21V3l18 18z" fill="#ddd" stroke="#888" stroke-width="1.2"/><path d="M7 17V11l6 6z" fill="#fff" stroke="#888"/><path d="M14 5h6v16" fill="#ddd" stroke="#888"/></svg><svg class="a" style="left:15px;top:176px" width="24" height="24" viewBox="0 0 24 24"><path d="M3 7c0-4 6-4 9-3s7 0 8 3-2 6-5 6-6 2-9 1-3-4-3-7z" fill="#aaa"/><rect x="11" y="13" width="11" height="9" rx="1.5" fill="#888"/><path d="M13 17.5h5M16 15l3 2.5-3 2.5" fill="none" stroke="#fff" stroke-width="1.6"/></svg><svg class="a" style="left:15px;top:208px" width="24" height="24" viewBox="0 0 24 24"><path d="M3 7c0-4 6-4 9-3s7 0 8 3-2 6-5 6-6 2-9 1-3-4-3-7z" fill="#aaa"/><rect x="13" y="13" width="10" height="10" rx="1.5" fill="#888"/><circle cx="18" cy="18" r="2.7" fill="none" stroke="#fff" stroke-width="1.4"/></svg><svg class="a" style="left:15px;top:242px" width="24" height="24" viewBox="0 0 24 24"><circle cx="9" cy="9" r="7" fill="#aaa"/><path d="M13 10l6 2 2 6-4 4-6-1-2-6z" fill="#aaa" stroke="#888"/><path d="M8 9l7 7" stroke="#555"/></svg><svg class="a" style="left:15px;top:275px" width="24" height="24" viewBox="0 0 24 24"><path d="M3 7c0-4 6-4 9-3s7 0 8 3-2 6-5 6-6 2-9 1-3-4-3-7z" fill="#aaa"/><ellipse cx="8" cy="8" rx="3.5" ry="2.5" fill="#eee"/><rect x="13" y="13" width="10" height="10" rx="2" fill="#b0b0b0"/><path d="M18 14.5v7M14.5 18h7M15.5 15.5l5 5M20.5 15.5l-5 5" stroke="#eee" stroke-width="1.1"/></svg><svg class="a" style="left:15px;top:308px" width="24" height="24" viewBox="0 0 24 24"><path d="M3 7c0-4 6-4 9-3s7 0 8 3-2 6-5 6-6 2-9 1-3-4-3-7z" fill="#aaa"/><path d="M2 18c2-5 6-6 8-3s-1 7-4 7-4-2-4-4z" fill="#999"/><rect x="13" y="13" width="10" height="10" rx="2" fill="#b0b0b0"/><path d="M18 14.5v7M14.5 18h7M15.5 15.5l5 5M20.5 15.5l-5 5" stroke="#eee" stroke-width="1.1"/></svg><svg class="a" style="left:15px;top:340px" width="24" height="24" viewBox="0 0 24 24"><path d="M3 7c0-4 6-4 9-3s7 0 8 3-2 6-5 6-6 2-9 1-3-4-3-7z" fill="#aaa"/><ellipse cx="8" cy="8" rx="3.5" ry="2.5" fill="#ccc"/><rect x="13" y="13" width="10" height="10" rx="2" fill="#b0b0b0"/><path d="M18 14.5v7M14.5 18h7M15.5 15.5l5 5M20.5 15.5l-5 5" stroke="#eee" stroke-width="1.1"/></svg><svg class="a" style="left:15px;top:372px" width="24" height="24" viewBox="0 0 24 24"><path d="M3 7c0-4 6-4 9-3s7 0 8 3-2 6-5 6-6 2-9 1-3-4-3-7z" fill="#aaa"/><ellipse cx="8" cy="8" rx="3.5" ry="2.5" fill="#eee"/><rect x="13" y="13" width="10" height="10" rx="2" fill="#999"/><path d="M15.5 15.5l5 5M20.5 15.5l-5 5" stroke="#fff" stroke-width="1.8"/></svg><svg class="a" style="left:15px;top:403px" width="24" height="24" viewBox="0 0 24 24"><path d="M3 7c0-4 6-4 9-3s7 0 8 3-2 6-5 6-6 2-9 1-3-4-3-7z" fill="#aaa"/><path d="M2 18c2-5 6-6 8-3s-1 7-4 7-4-2-4-4z" fill="#999"/><rect x="13" y="13" width="10" height="10" rx="2" fill="#999"/><path d="M15.5 15.5l5 5M20.5 15.5l-5 5" stroke="#fff" stroke-width="1.8"/></svg><svg class="a" style="left:15px;top:435px" width="24" height="24" viewBox="0 0 24 24"><path d="M4 6c2-4 8-3 12-2s6 4 4 8-6 3-8 6-6 2-8-2-2-6 0-10z" fill="#aaa"/><path d="M5 12c3 1 5-1 8 0" stroke="#777" fill="none"/></svg><svg class="a" style="left:15px;top:468px" width="24" height="24" viewBox="0 0 24 24"><path d="M4 18c-3-4 0-9 4-12s8-4 11-2 2 7-2 10-9 8-13 4z" fill="#aaa" stroke="#888"/></svg><svg class="a" style="left:15px;top:500px" width="24" height="24" viewBox="0 0 24 24"><path d="M3 3l6 14 5-10h6" fill="none" stroke="#bbb" stroke-width="1.2"/><rect x="8" y="15" width="3" height="3" fill="#eee" stroke="#aaa"/><rect x="13" y="13" width="10" height="10" rx="2" fill="#888"/><circle cx="18" cy="18" r="2.7" fill="none" stroke="#fff" stroke-width="1.4"/></svg><svg class="a" style="left:15px;top:531px" width="24" height="24" viewBox="0 0 24 24"><path d="M5 4c-3 1-3 6 1 7l2-1M19 4c3 1 3 6-1 7l-2-1" fill="#aaa" stroke="#999"/><path d="M6 10l10 8M18 10L8 18" stroke="#888" stroke-width="1.5"/><circle cx="7" cy="20" r="2" fill="none" stroke="#888" stroke-width="1.5"/><circle cx="17" cy="20" r="2" fill="none" stroke="#888" stroke-width="1.5"/></svg><svg class="a" style="left:15px;top:563px" width="24" height="24" viewBox="0 0 24 24"><path d="M5 4c-3 1-3 6 1 7l2-1M19 4c3 1 3 6-1 7l-2-1" fill="#aaa" stroke="#999"/><path d="M6 10l10 8M18 10L8 18" stroke="#888" stroke-width="1.5"/><circle cx="7" cy="20" r="2" fill="none" stroke="#888" stroke-width="1.5"/><circle cx="17" cy="20" r="2" fill="none" stroke="#888" stroke-width="1.5"/></svg><svg class="a" style="left:15px;top:594px" width="24" height="24" viewBox="0 0 24 24"><path d="M5 4c-3 1-3 6 1 7h12c4-1 4-6 1-7z" fill="#aaa"/><path d="M8 9h8M8 12h8" stroke="#666"/><path d="M9 14c-1 4 2 6 6 8" stroke="#777" fill="none"/></svg><svg class="a" style="left:15px;top:626px" width="24" height="24" viewBox="0 0 24 24"><path d="M3 6h18M3 13h18M3 20h18M3 3v5M21 3v5M3 10v5M21 10v5M3 17v5M21 17v5" stroke="#aaa"/><path d="M9 4c1 2 3 2 4 0M9 11c1 2 3 2 4 0M9 18c1 2 3 2 4 0" stroke="#888" fill="none"/></svg><svg class="a" style="left:15px;top:658px" width="24" height="24" viewBox="0 0 24 24"><path d="M9 20a8 8 0 0 1 0-14" fill="none" stroke="#999" stroke-width="1.3"/><path d="M12 3v10l8-5z" fill="#aaa" stroke="#888" stroke-width="0.7"/><path d="M12 13l-5 9h10z" fill="none" stroke="#bbb"/></svg><svg class="a" style="left:15px;top:710px" width="24" height="24" viewBox="0 0 24 24"><path d="M4 8l8-5 8 4-2 10-10 3z" fill="#4a80c8" stroke="#333" stroke-width="0.8"/><circle cx="4" cy="8" r="2" fill="#f0d030" stroke="#555" stroke-width="0.6"/><circle cx="12" cy="3" r="2" fill="#f0d030" stroke="#555" stroke-width="0.6"/><circle cx="20" cy="7" r="2" fill="#f0d030" stroke="#555" stroke-width="0.6"/><circle cx="8" cy="20" r="2" fill="#f0d030" stroke="#555" stroke-width="0.6"/><path d="M13 18l3 4 6-9" fill="none" stroke="#e8c020" stroke-width="2"/></svg><svg class="a" style="left:15px;top:740px" width="24" height="24" viewBox="0 0 24 24"><rect x="2" y="2" width="20" height="20" fill="#fff" stroke="#5a8ac8" stroke-width="1.2"/><rect x="2" y="2" width="20" height="4" fill="#5a8ac8"/><path d="M2 10h20M2 14h20M2 18h20M8 6v16M15 6v16" stroke="#e0c060" stroke-width="0.8"/><path d="M7 14a5 5 0 0 1 9-2M17 14a5 5 0 0 1-9 2" stroke="#3aa83a" stroke-width="2.4" fill="none"/></svg><svg class="a" style="left:15px;top:791px" width="24" height="24" viewBox="0 0 24 24"><path d="M12 2l10 18H2z" fill="#2a9a3a"/><path d="M12 9l4 7H8z" fill="#fff"/><rect x="2" y="21" width="20" height="2" fill="#e87030"/></svg><svg class="a" style="left:15px;top:823px" width="24" height="24" viewBox="0 0 24 24"><circle cx="11" cy="11" r="10" fill="#4a80c8"/><path d="M1 11h20M11 1v20M4 5c5 3 9 3 14 0M4 17c5-3 9-3 14 0" stroke="#ddd" stroke-width="1" fill="none"/><rect x="14" y="14" width="9" height="9" rx="1" fill="#2a7a3a"/><path d="M15.5 18h6M18.5 15v6" stroke="#fff" stroke-width="1.3"/></svg><svg class="a" style="left:15px;top:855px" width="24" height="24" viewBox="0 0 24 24"><circle cx="11" cy="11" r="10" fill="#4a80c8"/><path d="M1 11h20M11 1v20M4 5c5 3 9 3 14 0M4 17c5-3 9-3 14 0" stroke="#ddd" stroke-width="1" fill="none"/><rect x="14" y="14" width="9" height="9" rx="1" fill="#3a9a4a"/><circle cx="18" cy="18" r="2" fill="none" stroke="#fff"/></svg><svg class="a" style="left:15px;top:886px" width="24" height="24" viewBox="0 0 24 24"><circle cx="12" cy="10" r="9.5" fill="#4a80c8"/><path d="M2 10h20M12 1v19M5 4c5 3 9 3 14 0" stroke="#ddd" stroke-width="1" fill="none"/><circle cx="7" cy="19" r="4" fill="#111"/><circle cx="17" cy="19" r="4" fill="#111"/><rect x="7" y="16" width="10" height="3" fill="#111"/></svg><svg class="a" style="left:38px;top:189px" width="10" height="6"><path d="M0.5 0.5h9l-4.5 5z" fill="#aaa"/></svg><svg class="a" style="left:38px;top:669px" width="10" height="6"><path d="M0.5 0.5h9l-4.5 5z" fill="#aaa"/></svg><div class="a" style="left:18px;top:698px;width:18px;height:5px;background-image:radial-gradient(circle,#b4b4b4 0.7px,transparent 0.9px);background-size:3px 3px"></div><div class="a" style="left:18px;top:779px;width:18px;height:5px;background-image:radial-gradient(circle,#b4b4b4 0.7px,transparent 0.9px);background-size:3px 3px"></div><svg class="a" style="left:263px;top:134px" width="28" height="12"><rect x="0.5" y="0.5" width="11" height="11" rx="2.5" fill="none" stroke="#6a6a6a"/><rect x="2.5" y="4.5" width="5" height="5" fill="none" stroke="#6a6a6a"/><path d="M4.5 4.5v-2h5v5h-2" fill="none" stroke="#6a6a6a"/><rect x="15.5" y="0.5" width="11" height="11" rx="2.5" fill="none" stroke="#6a6a6a"/><path d="M18 3l6 6M24 3l-6 6" stroke="#5a5a5a" stroke-width="2"/></svg><svg class="a" style="left:60px;top:155px" width="20" height="20" viewBox="0 0 24 24"><path d="M3 14l6-4 6 6-4 5z" fill="#e44"/><path d="M4 10l7-5 5 5-7 5z" fill="#6ae"/><path d="M6 6l7-4 4 4-7 5z" fill="#fd4"/><path d="M10 14l10-11" stroke="#c8a050" stroke-width="2.5"/><path d="M8 12l6 6-4 3-5-5z" fill="#d8a860"/></svg><svg class="a" style="left:86px;top:155px" width="20" height="20" viewBox="0 0 24 24"><rect x="4" y="6" width="12" height="14" fill="none" stroke="#777"/><rect x="7" y="3" width="12" height="14" fill="#eee" stroke="#777"/><path d="M12 2v12" stroke="#3a6aa8" stroke-width="2"/><circle cx="18" cy="19" r="4" fill="#3a9a4a"/></svg><svg class="a" style="left:112px;top:155px" width="20" height="20" viewBox="0 0 24 24"><path d="M2 12c5-7 15-7 20 0-5 6-15 6-20 0z" fill="#ddd" stroke="#888"/><circle cx="11" cy="11" r="4" fill="#4a78c8"/><path d="M14 17h8l-4 5z" fill="#333"/></svg><svg class="a" style="left:136px;top:155px" width="20" height="20" viewBox="0 0 24 24"><path d="M2 3h20l-7 9v10h-6V12z" fill="#5a8ac8"/><rect x="2" y="3" width="20" height="3" fill="#f8e040"/></svg><svg class="a" style="left:162px;top:155px" width="20" height="20" viewBox="0 0 24 24"><text x="7" y="15" font-size="16" font-family="Liberation Serif" fill="#aaa">&#949;</text><path d="M13 14h8v8h-8z" fill="#ccc"/></svg><svg class="a" style="left:202px;top:155px" width="20" height="20" viewBox="0 0 24 24"><rect x="3" y="4" width="8" height="16" fill="none" stroke="#aaa"/><rect x="4" y="8" width="3" height="3" fill="#f0a020"/><rect x="4" y="15" width="3" height="3" fill="#f0a020"/><path d="M15 2v12h-4l6 8 6-8h-4V2z" fill="#4a7ac8"/></svg><svg class="a" style="left:227px;top:155px" width="20" height="20" viewBox="0 0 24 24"><rect x="3" y="4" width="8" height="16" fill="none" stroke="#aaa"/><rect x="4" y="8" width="3" height="3" fill="#f0a020"/><rect x="4" y="15" width="3" height="3" fill="#f0a020"/><path d="M15 22V10h-4l6-8 6 8h-4v12z" fill="#4a7ac8"/></svg><svg class="a" style="left:252px;top:155px" width="20" height="20" viewBox="0 0 24 24"><rect x="3" y="3" width="15" height="15" fill="#eee" stroke="#777"/><rect x="14" y="16" width="9" height="6" rx="2" fill="#e33"/><path d="M16 19h5" stroke="#fff" stroke-width="1.5"/></svg><svg class="a" style="left:185px;top:162px" width="10" height="6"><path d="M0.5 0.5h9l-4.5 5z" fill="#aaa"/></svg><svg class="a" style="left:65px;top:188px" width="8" height="10"><path d="M1 0.5l5 4.5-5 4.5z" fill="#404040"/></svg><div class="a" style="left:84px;top:185px;width:17px;height:17px;background:#fff;border:1px solid #8a8a8a"></div><svg class="a" style="left:84px;top:185px" width="17" height="17"><path d="M3.5 8.5l3.5 5 6-10" fill="none" stroke="#000" stroke-width="1.8"/></svg><svg class="a" style="left:107px;top:185px" width="20" height="16"><path d="M2 4c0-3 4-3 7-2s7 0 8 2-1 5 0 8-4 3-7 2-7 0-8-2 1-5 0-8z" fill="#eee" stroke="#888"/></svg><div class="t" style="left:132px;top:186.0px;font-size:13.5px;text-decoration:underline;text-underline-offset:2px"><b>World Map</b></div><div class="a" style="left:84px;top:206px;width:17px;height:17px;background:#fff;border:1px solid #8a8a8a"></div><div class="a" style="left:107px;top:205px;width:18px;height:18px;background:#5b9bde"></div><div class="t" style="left:131px;top:207.0px;font-size:13.5px;color:#b8b8b8"><b>Reticolo</b></div><div class="a" style="left:84px;top:226px;width:17px;height:17px;background:#fff;border:1px solid #8a8a8a"></div><svg class="a" style="left:84px;top:226px" width="17" height="17"><path d="M3.5 8.5l3.5 5 6-10" fill="none" stroke="#000" stroke-width="1.8"/></svg><div class="a" style="left:107px;top:225px;width:18px;height:18px;background:#5b9bde"></div><div class="t" style="left:131px;top:227.0px;font-size:13.5px;"><b>Reticolo</b></div><svg class="a" style="left:273px;top:208px" width="14" height="12"><rect x="0.5" y="3" width="13" height="7" rx="1.5" fill="none" stroke="#555"/><path d="M3 0v3M6 0v3M9 0v3M12 0v3M3 10v2M6 10v2M9 10v2M12 10v2" stroke="#555"/></svg><svg class="a" style="left:273px;top:228px" width="14" height="12"><rect x="0.5" y="3" width="13" height="7" rx="1.5" fill="none" stroke="#555"/><path d="M3 0v3M6 0v3M9 0v3M12 0v3M3 10v2M6 10v2M9 10v2M12 10v2" stroke="#555"/></svg><div class="a" style="left:167px;top:514px;width:16px;height:5px;background-image:radial-gradient(circle,#b4b4b4 0.7px,transparent 0.9px);background-size:3px 3px"></div><svg class="a" style="left:263px;top:522px" width="28" height="12"><rect x="0.5" y="0.5" width="11" height="11" rx="2.5" fill="none" stroke="#6a6a6a"/><rect x="2.5" y="4.5" width="5" height="5" fill="none" stroke="#6a6a6a"/><path d="M4.5 4.5v-2h5v5h-2" fill="none" stroke="#6a6a6a"/><rect x="15.5" y="0.5" width="11" height="11" rx="2.5" fill="none" stroke="#6a6a6a"/><path d="M18 3l6 6M24 3l-6 6" stroke="#5a5a5a" stroke-width="2"/></svg><svg class="a" style="left:60px;top:544px" width="20" height="20" viewBox="0 0 24 24"><rect x="3" y="3" width="15" height="15" fill="#eee" stroke="#777"/><circle cx="19" cy="19" r="4" fill="#3a9a4a"/><circle cx="19" cy="19" r="2" fill="#aca"/></svg><svg class="a" style="left:86px;top:544px" width="20" height="20" viewBox="0 0 24 24"><path d="M4 12a8 8 0 0 1 14-5l2-3v8h-8l3-3a5 5 0 0 0-8 3z M20 12a8 8 0 0 1-14 5l-2 3v-8h8l-3 3a5 5 0 0 0 8-3z" fill="#4a8ad0"/></svg><svg class="a" style="left:111px;top:544px" width="20" height="20" viewBox="0 0 24 24"><path d="M2 3h20l-7 9v10h-6V12z" fill="#5a8ac8"/><rect x="2" y="3" width="20" height="3" fill="#f8e040"/></svg><svg class="a" style="left:136px;top:544px" width="20" height="20" viewBox="0 0 24 24"><rect x="3" y="4" width="8" height="16" fill="none" stroke="#aaa"/><rect x="4" y="8" width="3" height="3" fill="#f0a020"/><rect x="4" y="15" width="3" height="3" fill="#f0a020"/><path d="M15 22V10h-4l6-8 6 8h-4v12z" fill="#4a7ac8"/></svg><svg class="a" style="left:161px;top:544px" width="20" height="20" viewBox="0 0 24 24"><circle cx="12" cy="12" r="10" fill="#4a80c8"/><text x="12" y="18" font-size="15" font-style="italic" font-weight="bold" font-family="Liberation Serif" text-anchor="middle" fill="#fff">i</text></svg><svg class="a" style="left:65px;top:577px" width="8" height="10"><path d="M1 0.5l5 4.5-5 4.5z" fill="#404040"/></svg><svg class="a" style="left:83px;top:571px" width="22" height="22" viewBox="0 0 24 24"><path d="M12 1l3.3 7 7.7.9-5.7 5.2 1.6 7.6L12 18l-6.9 3.7 1.6-7.6L1 8.9 8.7 8z" fill="#f8e040" stroke="#c8a010" stroke-width="1.2"/></svg><div class="t" style="left:110px;top:575.0px;font-size:13.5px;letter-spacing:0px">Preferiti</div><svg class="a" style="left:65px;top:599px" width="8" height="10"><path d="M1 0.5l5 4.5-5 4.5z" fill="#404040"/></svg><svg class="a" style="left:83px;top:593px" width="22" height="22" viewBox="0 0 24 24"><path d="M3 5h7l2 2h9v14H3z" fill="#eee" stroke="#888"/><path d="M8 14l4-4 4 4v5H8z" fill="#fff" stroke="#222" stroke-width="1.2"/></svg><div class="t" style="left:110px;top:597.0px;font-size:13.5px;letter-spacing:0px">Home</div><svg class="a" style="left:65px;top:621px" width="8" height="10"><path d="M1 0.5l5 4.5-5 4.5z" fill="#404040"/></svg><svg class="a" style="left:83px;top:615px" width="22" height="22" viewBox="0 0 24 24"><path d="M3 4h7l2 3h9v14H3z" fill="#eee" stroke="#888" stroke-width="1.1"/></svg><div class="t" style="left:110px;top:619.0px;font-size:13.5px;letter-spacing:0px">C:\</div><svg class="a" style="left:65px;top:643px" width="8" height="10"><path d="M1 0.5l5 4.5-5 4.5z" fill="#404040"/></svg><svg class="a" style="left:83px;top:637px" width="22" height="22" viewBox="0 0 24 24"><path d="M3 4h7l2 3h9v14H3z" fill="#eee" stroke="#888" stroke-width="1.1"/></svg><div class="t" style="left:110px;top:641.0px;font-size:13.5px;letter-spacing:0px">D:\</div><svg class="a" style="left:65px;top:665px" width="8" height="10"><path d="M1 0.5l5 4.5-5 4.5z" fill="#404040"/></svg><svg class="a" style="left:83px;top:659px" width="22" height="22" viewBox="0 0 24 24"><path d="M3 4h7l2 3h9v14H3z" fill="#eee" stroke="#888" stroke-width="1.1"/></svg><div class="t" style="left:110px;top:663.0px;font-size:13.5px;letter-spacing:0px">E:\</div><svg class="a" style="left:65px;top:687px" width="8" height="10"><path d="M1 0.5l5 4.5-5 4.5z" fill="#404040"/></svg><svg class="a" style="left:83px;top:681px" width="22" height="22" viewBox="0 0 24 24"><path d="M3 4h7l2 3h9v14H3z" fill="#eee" stroke="#888" stroke-width="1.1"/></svg><div class="t" style="left:110px;top:685.0px;font-size:13.5px;letter-spacing:0px">F:\</div><svg class="a" style="left:65px;top:709px" width="8" height="10"><path d="M1 0.5l5 4.5-5 4.5z" fill="#404040"/></svg><svg class="a" style="left:83px;top:703px" width="22" height="22" viewBox="0 0 24 24"><path d="M2 9l4-3h16v10l-4 4H2z" fill="#f0c830" stroke="#333" stroke-width="0.8"/><circle cx="12" cy="7" r="6" fill="#5a8ac8"/><path d="M2 9h16v11H2z" fill="#e0b020" stroke="#333" stroke-width="0.8"/></svg><div class="t" style="left:110px;top:707.0px;font-size:13.5px;letter-spacing:0px">GeoPackage</div><svg class="a" style="left:65px;top:731px" width="8" height="10"><path d="M1 0.5l5 4.5-5 4.5z" fill="#404040"/></svg><svg class="a" style="left:83px;top:725px" width="22" height="22" viewBox="0 0 24 24"><path d="M2 22C6 12 12 4 22 2c-2 8-8 14-16 16z" fill="#7aa0d0" stroke="#4a6a90" stroke-width="0.8"/></svg><div class="t" style="left:110px;top:729.0px;font-size:13.5px;letter-spacing:0px">SpatiaLite</div><svg class="a" style="left:65px;top:753px" width="8" height="10"><path d="M1 0.5l5 4.5-5 4.5z" fill="#404040"/></svg><svg class="a" style="left:83px;top:747px" width="22" height="22" viewBox="0 0 24 24"><path d="M4 6c0-4 6-5 8-3 3-2 9-1 9 3 0 5-3 7-4 7 0 3-1 7-4 8-1-3-2-5-5-5-3-1-4-6-4-10z" fill="#5a8ac8" stroke="#2a4a78"/></svg><div class="t" style="left:110px;top:751.0px;font-size:13.5px;letter-spacing:0px">PostGIS</div><svg class="a" style="left:83px;top:769px" width="22" height="22" viewBox="0 0 24 24"><path d="M2 2c8 2 14 5 20 8-6 3-12 7-20 12 3-6 4-14 0-20z" fill="#5a8ac8" stroke="#2a4a78"/></svg><div class="t" style="left:110px;top:773.0px;font-size:13.5px;letter-spacing:0px">MSSQL</div><svg class="a" style="left:83px;top:791px" width="22" height="22" viewBox="0 0 24 24"><rect x="1" y="2" width="22" height="20" rx="3" fill="#5a8ac8"/><text x="12" y="15" font-size="8" font-family="Liberation Sans" text-anchor="middle" fill="#fff">DB2</text></svg><div class="t" style="left:110px;top:795.0px;font-size:13.5px;letter-spacing:0px">DB2</div><svg class="a" style="left:65px;top:819px" width="8" height="10"><path d="M1 0.5l5 4.5-5 4.5z" fill="#404040"/></svg><svg class="a" style="left:83px;top:813px" width="22" height="22" viewBox="0 0 24 24"><circle cx="12" cy="12" r="10" fill="#a8c4e4" stroke="#5a7aa8"/><path d="M5 8c3 0 4 3 7 2s3-5 6-4M6 17c2-2 5-1 6 1M15 15c2 0 3 2 3 4" stroke="#3a5a88" stroke-width="2" fill="none"/></svg><div class="t" style="left:110px;top:817.0px;font-size:13.5px;letter-spacing:0px">WMS/WMTS</div><svg class="a" style="left:65px;top:841px" width="8" height="10"><path d="M1 0.5l5 4.5-5 4.5z" fill="#404040"/></svg><svg class="a" style="left:83px;top:835px" width="22" height="22" viewBox="0 0 24 24"><circle cx="12" cy="12" r="10" fill="#a8c4e4" stroke="#5a7aa8"/><path d="M5 8c3 0 4 3 7 2s3-5 6-4M6 17c2-2 5-1 6 1M15 15c2 0 3 2 3 4" stroke="#3a5a88" stroke-width="2" fill="none"/></svg><div class="t" style="left:110px;top:839.0px;font-size:13.5px;letter-spacing:0px">XYZ Tiles</div><svg class="a" style="left:65px;top:863px" width="8" height="10"><path d="M1 0.5l5 4.5-5 4.5z" fill="#404040"/></svg><svg class="a" style="left:83px;top:857px" width="22" height="22" viewBox="0 0 24 24"><circle cx="12" cy="12" r="10" fill="#5a80b8" stroke="#2a4a78"/><path d="M2 12h20M12 2v20M4 7h16M4 17h16" stroke="#fff" stroke-width="1"/><ellipse cx="12" cy="12" rx="5" ry="10" fill="none" stroke="#fff"/></svg><div class="t" style="left:110px;top:861.0px;font-size:13.5px;letter-spacing:0px">WCS</div><svg class="a" style="left:65px;top:885px" width="8" height="10"><path d="M1 0.5l5 4.5-5 4.5z" fill="#404040"/></svg><svg class="a" style="left:83px;top:879px" width="22" height="22" viewBox="0 0 24 24"><circle cx="12" cy="12" r="10" fill="#dde8f4" stroke="#5a7aa8"/><path d="M2 12h20M7 7l5 12 5-12" stroke="#5a7aa8" fill="none"/></svg><div class="t" style="left:110px;top:883.0px;font-size:13.5px;letter-spacing:0px">WFS</div><svg class="a" style="left:65px;top:907px" width="8" height="10"><path d="M1 0.5l5 4.5-5 4.5z" fill="#404040"/></svg><svg class="a" style="left:83px;top:901px" width="22" height="22" viewBox="0 0 24 24"><circle cx="12" cy="12" r="10" fill="#eef2f8" stroke="#5a7aa8"/><path d="M2 12h20M12 2v20M4 7h16M4 17h16" stroke="#5a7aa8" stroke-width="0.8"/><ellipse cx="12" cy="12" rx="5" ry="10" fill="none" stroke="#5a7aa8" stroke-width="0.8"/></svg><div class="t" style="left:110px;top:905.0px;font-size:13.5px;letter-spacing:0px">OWS</div><svg class="a" style="left:65px;top:929px" width="8" height="10"><path d="M1 0.5l5 4.5-5 4.5z" fill="#404040"/></svg><svg class="a" style="left:83px;top:923px" width="22" height="22" viewBox="0 0 24 24"><circle cx="12" cy="12" r="10" fill="#a8c4e4" stroke="#5a7aa8"/><path d="M5 8c3 0 4 3 7 2s3-5 6-4M6 17c2-2 5-1 6 1M15 15c2 0 3 2 3 4" stroke="#3a5a88" stroke-width="2" fill="none"/></svg><div class="t" style="left:110px;top:927.0px;font-size:13.5px;letter-spacing:0px">ArcGisMapServer</div><svg class="a" style="left:65px;top:951px" width="8" height="10"><path d="M1 0.5l5 4.5-5 4.5z" fill="#404040"/></svg><svg class="a" style="left:83px;top:945px" width="22" height="22" viewBox="0 0 24 24"><circle cx="12" cy="12" r="10" fill="#a8c4e4" stroke="#5a7aa8"/><path d="M5 8c3 0 4 3 7 2s3-5 6-4M6 17c2-2 5-1 6 1M15 15c2 0 3 2 3 4" stroke="#3a5a88" stroke-width="2" fill="none"/></svg><div class="t" style="left:110px;top:949.0px;font-size:13.5px;letter-spacing:0px">ArcGisFeatureServer</div><svg class="a" style="left:65px;top:973px" width="8" height="10"><path d="M1 0.5l5 4.5-5 4.5z" fill="#404040"/></svg><svg class="a" style="left:83px;top:967px" width="22" height="22" viewBox="0 0 24 24"><path d="M12 2v20M3 7l18 10M21 7L3 17" stroke="#4a78b8" stroke-width="3"/><circle cx="12" cy="12" r="3" fill="#4a78b8"/><circle cx="12" cy="12" r="1.5" fill="#fff"/></svg><div class="t" style="left:110px;top:971.0px;font-size:13.5px;letter-spacing:0px">GeoNode</div><div class="a" style="left:299px;top:130px;width:1621px;height:918px;background:#fff"></div><div class="a" style="left:1919px;top:130px;width:1px;height:918px;background:#b4b4b4"></div><div class="a" style="left:299px;top:1047px;width:1621px;height:1px;background:#b4b4b4"></div><div class="a" style="left:0px;top:1048px;width:1920px;height:30px;background:#f0f0f0"></div><div class="a" style="left:0px;top:1078px;width:1920px;height:2px;background:#202020"></div><div class="a" style="left:4px;top:1051px;width:309px;height:26px;background:#fff;border:1px solid #a4a4a4;border-radius:3px"></div><svg class="a" style="left:12px;top:1056px" width="16" height="16"><circle cx="6.5" cy="6.5" r="4.8" fill="none" stroke="#666" stroke-width="1.3"/><path d="M10 10l4 4" stroke="#666" stroke-width="1.6"/></svg><div class="t" style="left:33px;top:1058.4px;font-size:13px;color:#6a6a6a;letter-spacing:0.287px">Digita per localizzare (Ctrl+K)</div><div class="t" style="left:321.5px;top:1058.4px;font-size:13px;;letter-spacing:0.945px">Pronto</div><div class="t" style="left:870px;top:1058.4px;font-size:13px;;letter-spacing:0.603px">Coordinate</div><div class="a" style="left:943px;top:1052px;width:118px;height:25px;background:#fff;border:1px solid #b0b0b0;border-radius:2px"></div><div class="t" style="left:946.5px;top:1058.4px;font-size:13px;;letter-spacing:-0.007px">11198450,6088454</div><svg class="a" style="left:1064px;top:1053px" width="22" height="22" viewBox="0 0 22 22"><ellipse cx="10" cy="11" rx="6" ry="8" fill="#555" transform="rotate(-25 10 11)"/><ellipse cx="10" cy="10" rx="3" ry="4" fill="#ddd" transform="rotate(-25 10 10)"/><circle cx="12" cy="16" r="2" fill="#fff"/><path d="M16 6l4-3" stroke="#555" stroke-dasharray="1 1"/></svg><div class="t" style="left:1098.6px;top:1058.4px;font-size:13px;;letter-spacing:-0.373px">Scala</div><div class="a" style="left:1133px;top:1052px;width:91px;height:25px;background:#fff;border:1px solid #b0b0b0;border-radius:2px"></div><div class="t" style="left:1134px;top:1058.4px;font-size:13px;;letter-spacing:-0.052px">:68977771</div><svg class="a" style="left:1203px;top:1061px" width="12" height="8"><path d="M1 1h10l-5 5z" fill="#505050"/></svg><svg class="a" style="left:1236px;top:1055px" width="16" height="19"><path d="M4 8V5.5a4 4 0 0 1 8 0V8" fill="none" stroke="#6a6a6a" stroke-width="2"/><rect x="1" y="8" width="14" height="11" rx="2" fill="#6a6a6a"/></svg><div class="t" style="left:1261.3px;top:1058.4px;font-size:13px;;letter-spacing:0.640px">Lente d'ingrandimento</div><div class="a" style="left:1405px;top:1052px;width:93px;height:25px;background:#fff;border:1px solid #b0b0b0;border-radius:2px"></div><div class="a" style="left:1480px;top:1053px;width:1px;height:23px;background:#d0d0d0"></div><svg class="a" style="left:1483px;top:1055px" width="12" height="19"><path d="M1.5 8l4.5-5 4.5 5z" fill="#606060"/><path d="M1.5 11l4.5 5 4.5-5z" fill="#606060"/></svg><div class="t" style="left:1410px;top:1058.4px;font-size:13px;;letter-spacing:-0.403px">100%</div><div class="t" style="left:1507.2px;top:1058.4px;font-size:13px;;letter-spacing:0.487px">Rotazione</div><div class="a" style="left:1578px;top:1052px;width:88px;height:25px;background:#fff;border:1px solid #b0b0b0;border-radius:2px"></div><div class="a" style="left:1648px;top:1053px;width:1px;height:23px;background:#d0d0d0"></div><svg class="a" style="left:1651px;top:1055px" width="12" height="19"><path d="M1.5 8l4.5-5 4.5 5z" fill="#606060"/><path d="M1.5 11l4.5 5 4.5-5z" fill="#606060"/></svg><div class="t" style="left:1583px;top:1058.4px;font-size:13px;;letter-spacing:0.287px">0,0 °</div><div class="a" style="left:1672px;top:1055px;width:17px;height:17px;background:#fff;border:1px solid #909090"></div><svg class="a" style="left:1672px;top:1055px" width="17" height="17"><path d="M3.5 8.5l3.5 5 6-10" fill="none" stroke="#000" stroke-width="1.8"/></svg><div class="t" style="left:1695.4px;top:1058.4px;font-size:13px;;letter-spacing:0.305px">Visualizza</div><svg class="a" style="left:1772px;top:1054px" width="21" height="19" viewBox="0 0 21 19"><circle cx="10.5" cy="9.5" r="8.5" fill="none" stroke="#6a6a6a" stroke-width="1.5"/><path d="M2 9.5h17M10.5 1v17M4 5h13M4 14h13" stroke="#6a6a6a" stroke-width="1.2"/><ellipse cx="10.5" cy="9.5" rx="4" ry="8.5" fill="none" stroke="#6a6a6a" stroke-width="1.2"/></svg><div class="t" style="left:1797px;top:1058.4px;font-size:13px;;letter-spacing:-0.558px">USER:100038</div><svg class="a" style="left:1892px;top:1054px" width="21" height="20" viewBox="0 0 21 20"><ellipse cx="10.5" cy="8.5" rx="10" ry="8" fill="#6a6a6a"/><path d="M13 14l6 5-1-7z" fill="#6a6a6a"/><circle cx="6" cy="8.5" r="1.5" fill="#fff"/><circle cx="10.5" cy="8.5" r="1.5" fill="#fff"/><circle cx="15" cy="8.5" r="1.5" fill="#fff"/></svg><div class="t" style="left:1256px;top:1015.0px;font-size:26px;;letter-spacing:0.130px">© Salvatore Fiandaca 2018 - QGIS 3.4.1 LTR MADEIRA</div>
<svg class="a" style="left:0;top:0" width="1920" height="1080" viewBox="0 0 1920 1080"><defs><filter id="sh" x="-20%" y="-20%" width="140%" height="140%"><feGaussianBlur stdDeviation="10"/></filter><filter id="halo" x="-20%" y="-20%" width="140%" height="140%"><feGaussianBlur stdDeviation="6"/></filter><clipPath id="gc"><polygon points="672.7,588.0 674.4,550.0 679.3,512.4 687.5,475.3 699.0,439.0 713.5,403.9 731.1,370.2 751.5,338.2 774.6,308.0 800.3,280.0 828.3,254.3 858.5,231.2 890.5,210.8 924.2,193.2 959.3,178.7 995.6,167.2 1032.7,159.0 1070.3,154.1 1108.3,152.4 1146.3,154.1 1183.9,159.0 1221.0,167.2 1257.3,178.7 1292.4,193.2 1326.1,210.8 1358.1,231.2 1388.3,254.3 1416.3,280.0 1442.0,308.0 1465.1,338.2 1485.5,370.2 1503.1,403.9 1517.6,439.0 1529.1,475.3 1537.3,512.4 1542.2,550.0 1543.9,588.0 1542.2,626.0 1537.3,663.6 1531.9,678.5 1517.0,743.7 1471.0,834.4 1437.8,870.6 1365.6,940.0 1315.6,967.8 1244.0,1003.0 1194.0,1014.7 1144.0,1021.0 1089.7,1022.5 1038.0,1017.8 988.0,1006.9 946.0,992.8 868.0,951.0 826.7,920.6 765.6,856.7 699.0,737.0 687.5,700.7 679.3,663.6 674.4,626.0"/></clipPath><clipPath id="cv"><rect x="299" y="130" width="1620" height="917"/></clipPath></defs><g clip-path="url(#cv)"><polygon points="672.7,588.0 674.4,550.0 679.3,512.4 687.5,475.3 699.0,439.0 713.5,403.9 731.1,370.2 751.5,338.2 774.6,308.0 800.3,280.0 828.3,254.3 858.5,231.2 890.5,210.8 924.2,193.2 959.3,178.7 995.6,167.2 1032.7,159.0 1070.3,154.1 1108.3,152.4 1146.3,154.1 1183.9,159.0 1221.0,167.2 1257.3,178.7 1292.4,193.2 1326.1,210.8 1358.1,231.2 1388.3,254.3 1416.3,280.0 1442.0,308.0 1465.1,338.2 1485.5,370.2 1503.1,403.9 1517.6,439.0 1529.1,475.3 1537.3,512.4 1542.2,550.0 1543.9,588.0 1542.2,626.0 1537.3,663.6 1531.9,678.5 1517.0,743.7 1471.0,834.4 1437.8,870.6 1365.6,940.0 1315.6,967.8 1244.0,1003.0 1194.0,1014.7 1144.0,1021.0 1089.7,1022.5 1038.0,1017.8 988.0,1006.9 946.0,992.8 868.0,951.0 826.7,920.6 765.6,856.7 699.0,737.0 687.5,700.7 679.3,663.6 674.4,626.0" transform="translate(5 6)" fill="#000" opacity="0.62" filter="url(#sh)"/><polygon points="672.7,588.0 674.4,550.0 679.3,512.4 687.5,475.3 699.0,439.0 713.5,403.9 731.1,370.2 751.5,338.2 774.6,308.0 800.3,280.0 828.3,254.3 858.5,231.2 890.5,210.8 924.2,193.2 959.3,178.7 995.6,167.2 1032.7,159.0 1070.3,154.1 1108.3,152.4 1146.3,154.1 1183.9,159.0 1221.0,167.2 1257.3,178.7 1292.4,193.2 1326.1,210.8 1358.1,231.2 1388.3,254.3 1416.3,280.0 1442.0,308.0 1465.1,338.2 1485.5,370.2 1503.1,403.9 1517.6,439.0 1529.1,475.3 1537.3,512.4 1542.2,550.0 1543.9,588.0 1542.2,626.0 1537.3,663.6 1531.9,678.5 1517.0,743.7 1471.0,834.4 1437.8,870.6 1365.6,940.0 1315.6,967.8 1244.0,1003.0 1194.0,1014.7 1144.0,1021.0 1089.7,1022.5 1038.0,1017.8 988.0,1006.9 946.0,992.8 868.0,951.0 826.7,920.6 765.6,856.7 699.0,737.0 687.5,700.7 679.3,663.6 674.4,626.0" fill="#5a9bdd"/><g clip-path="url(#gc)"><path d="M940.0,989.8 L941.3,990.3 L987.6,1006.1 L1037.7,1016.5 L1089.8,1021.4 L1142.6,1020.6 L1194.2,1014.0 L1243.3,1001.9 L1276.6,989.8 M822.0,916.3 L825.0,918.9 L865.7,947.7 L913.8,971.6 L967.8,990.0 L1026.0,1002.2 L1086.8,1007.8 L1148.2,1006.8 L1208.4,999.2 L1265.5,985.1 L1317.9,965.0 L1363.9,939.5 L1394.6,916.3 M748.0,832.8 L757.9,846.3 L793.6,882.7 L838.8,914.7 L892.2,941.3 L952.2,961.7 L1016.9,975.2 L1084.4,981.5 L1152.6,980.4 L1219.5,971.9 L1283.0,956.2 L1341.2,933.9 L1392.3,905.6 L1434.8,872.2 L1467.3,834.6 L1468.6,832.8 M700.8,742.0 L706.8,756.1 L733.6,798.6 L771.7,837.5 L820.1,871.8 L877.2,900.2 L941.3,922.0 L1010.6,936.5 L1082.7,943.2 L1155.7,942.0 L1227.2,932.9 L1295.1,916.2 L1357.4,892.3 L1412.0,862.0 L1457.5,826.3 L1492.3,786.1 L1515.5,742.8 L1515.8,742.0 M676.6,646.4 L677.9,654.2 L692.9,700.5 L720.6,744.5 L760.1,784.8 L810.1,820.2 L869.2,849.6 L935.6,872.2 L1007.2,887.2 L1081.9,894.2 L1157.3,892.9 L1231.3,883.5 L1301.6,866.2 L1366.0,841.5 L1422.5,810.2 L1469.6,773.2 L1505.6,731.6 L1529.5,686.8 L1540.0,646.4 M674.4,549.0 L676.6,595.1 L691.7,641.6 L719.4,685.7 L759.0,726.1 L809.2,761.6 L868.5,791.1 L935.0,813.7 L1006.9,828.8 L1081.8,835.8 L1157.5,834.5 L1231.7,825.1 L1302.2,807.7 L1366.8,782.9 L1423.5,751.5 L1470.7,714.4 L1506.8,672.8 L1530.8,627.8 L1542.0,580.9 L1542.2,549.0 M694.2,452.9 L686.4,489.7 L688.4,535.8 L703.0,581.0 L730.0,623.9 L768.5,663.2 L817.4,697.7 L875.0,726.4 L939.8,748.4 L1009.6,763.1 L1082.5,769.9 L1156.1,768.7 L1228.3,759.5 L1296.9,742.6 L1359.7,718.5 L1414.9,687.9 L1460.8,651.8 L1495.9,611.3 L1519.3,567.6 L1530.2,522.0 L1528.2,475.9 L1522.4,452.9 M736.6,360.8 L721.4,391.7 L711.1,434.6 L712.9,478.0 L726.7,520.6 L752.2,561.0 L788.4,598.0 L834.4,630.5 L888.7,657.5 L949.6,678.2 L1015.4,692.0 L1084.0,698.4 L1153.3,697.3 L1221.3,688.6 L1285.9,672.7 L1345.0,650.0 L1397.0,621.3 L1440.1,587.3 L1473.2,549.1 L1495.2,508.0 L1505.5,465.0 L1503.7,421.6 L1489.9,379.1 L1480.0,360.8 M804.7,275.7 L777.1,307.9 L757.1,345.3 L747.8,384.2 L749.5,423.6 L762.0,462.2 L785.1,498.9 L818.0,532.5 L859.7,562.0 L909.0,586.5 L964.3,605.3 L1024.0,617.8 L1086.3,623.6 L1149.2,622.6 L1210.9,614.8 L1269.4,600.3 L1323.1,579.7 L1370.3,553.6 L1409.4,522.8 L1439.5,488.2 L1459.5,450.8 L1468.8,411.8 L1467.1,372.4 L1454.6,333.8 L1431.5,297.2 L1411.9,275.7 M910.3,200.0 L881.0,217.0 L847.0,243.8 L820.9,273.8 L803.6,306.2 L795.5,340.0 L797.0,374.2 L807.9,407.7 L827.9,439.5 L856.4,468.7 L892.6,494.3 L935.4,515.6 L983.4,531.9 L1035.2,542.7 L1089.2,547.8 L1143.8,546.9 L1197.3,540.1 L1248.1,527.5 L1294.7,509.7 L1335.6,487.0 L1369.6,460.3 L1395.7,430.2 L1413.0,397.8 L1421.1,364.0 L1419.6,329.8 L1408.7,296.3 L1388.7,264.5 L1360.2,235.3 L1324.0,209.7 L1306.3,200.0 M1079.3,153.9 L1035.6,159.5 L994.1,169.7 L956.0,184.3 L922.6,202.8 L894.8,224.7 L873.5,249.3 L859.3,275.8 L852.7,303.4 L853.9,331.3 L862.8,358.7 L879.2,384.7 L902.5,408.5 L932.1,429.4 L967.0,446.8 L1006.2,460.1 L1048.5,469.0 L1092.7,473.1 L1137.3,472.4 L1181.0,466.8 L1222.5,456.6 L1260.6,442.0 L1294.0,423.5 L1321.8,401.6 L1343.1,377.1 L1357.3,350.6 L1363.9,322.9 L1362.7,295.0 L1353.8,267.6 L1337.4,241.7 L1314.1,217.8 L1284.5,196.9 L1249.6,179.5 L1210.4,166.2 L1168.1,157.3 L1123.9,153.2 L1079.3,153.9 M1086.7,163.9 L1054.1,168.1 L1023.1,175.7 L994.7,186.6 L969.8,200.4 L949.1,216.7 L933.2,235.0 L922.6,254.8 L917.7,275.4 L918.6,296.2 L925.2,316.6 L937.4,336.0 L954.8,353.8 L976.9,369.4 L1002.9,382.3 L1032.2,392.3 L1063.7,398.9 L1096.6,402.0 L1129.9,401.4 L1162.5,397.3 L1193.5,389.6 L1221.9,378.7 L1246.8,364.9 L1267.5,348.6 L1283.4,330.3 L1294.0,310.6 L1298.9,290.0 L1298.0,269.1 L1291.4,248.7 L1279.2,229.3 L1261.8,211.6 L1239.7,196.0 L1213.7,183.0 L1184.4,173.1 L1152.9,166.4 L1120.0,163.4 L1086.7,163.9 M1094.7,186.8 L1074.2,189.4 L1054.7,194.2 L1036.9,201.0 L1021.2,209.7 L1008.2,220.0 L998.2,231.5 L991.5,243.9 L988.5,256.9 L989.0,269.9 L993.2,282.8 L1000.8,295.0 L1011.8,306.1 L1025.7,316.0 L1042.0,324.1 L1060.4,330.4 L1080.3,334.5 L1101.0,336.5 L1121.9,336.1 L1142.4,333.5 L1161.9,328.7 L1179.7,321.9 L1195.4,313.2 L1208.4,302.9 L1218.4,291.4 L1225.1,279.0 L1228.1,266.0 L1227.6,252.9 L1223.4,240.1 L1215.8,227.9 L1204.8,216.7 L1190.9,206.9 L1174.6,198.8 L1156.2,192.5 L1136.3,188.4 L1115.6,186.4 L1094.7,186.8 M1103.1,221.8 L1095.4,222.8 L1088.0,224.6 L1081.2,227.2 L1075.3,230.5 L1070.3,234.4 L1066.5,238.8 L1064.0,243.5 L1062.9,248.4 L1063.1,253.4 L1064.6,258.2 L1067.6,262.9 L1071.7,267.1 L1077.0,270.8 L1083.2,273.9 L1090.1,276.3 L1097.7,277.9 L1105.5,278.6 L1113.5,278.5 L1121.2,277.5 L1128.6,275.6 L1135.4,273.1 L1141.3,269.8 L1146.3,265.9 L1150.1,261.5 L1152.6,256.8 L1153.7,251.9 L1153.5,246.9 L1152.0,242.0 L1149.0,237.4 L1144.9,233.2 L1139.6,229.5 L1133.4,226.4 L1126.5,224.0 L1118.9,222.4 L1111.1,221.7 L1103.1,221.8 M1077.3,153.5 L1079.3,153.9 L1086.7,163.9 L1094.7,186.8 L1103.1,221.8 M1028.9,159.7 L1035.6,159.5 L1054.1,168.1 L1074.2,189.4 L1095.4,222.8 M978.5,172.2 L994.1,169.7 L1023.1,175.7 L1054.7,194.2 L1088.0,224.6 M925.2,192.7 L956.0,184.3 L994.7,186.6 L1036.9,201.0 L1081.2,227.2 M868.5,224.4 L881.0,217.0 L922.6,202.8 L969.8,200.4 L1021.2,209.7 L1075.3,230.5 M809.0,271.5 L847.0,243.8 L894.8,224.7 L949.1,216.7 L1008.2,220.0 L1070.3,234.4 M750.5,339.5 L777.1,307.9 L820.9,273.8 L873.5,249.3 L933.2,235.0 L998.2,231.5 L1066.5,238.8 M701.6,432.0 L721.4,391.7 L757.1,345.3 L803.6,306.2 L859.3,275.8 L922.6,254.8 L991.5,243.9 L1064.0,243.5 M674.8,545.6 L686.4,489.7 L711.1,434.6 L747.8,384.2 L795.5,340.0 L852.7,303.4 L917.7,275.4 L988.5,256.9 L1062.9,248.4 M679.7,666.0 L677.9,654.2 L676.6,595.1 L688.4,535.8 L712.9,478.0 L749.5,423.6 L797.0,374.2 L853.9,331.3 L918.6,296.2 L989.0,269.9 L1063.1,253.4 M714.6,774.3 L706.8,756.1 L692.9,700.5 L691.7,641.6 L703.0,581.0 L726.7,520.6 L762.0,462.2 L807.9,407.7 L862.8,358.7 L925.2,316.6 L993.2,282.8 L1064.6,258.2 M767.6,859.4 L757.9,846.3 L733.6,798.6 L720.6,744.5 L719.4,685.7 L730.0,623.9 L752.2,561.0 L785.1,498.9 L827.9,439.5 L879.2,384.7 L937.4,336.0 L1000.8,295.0 L1067.6,262.9 M827.0,920.6 L825.0,918.9 L793.6,882.7 L771.7,837.5 L760.1,784.8 L759.0,726.1 L768.5,663.2 L788.4,598.0 L818.0,532.5 L856.4,468.7 L902.5,408.5 L954.8,353.8 L1011.8,306.1 L1071.7,267.1 M885.8,962.5 L865.7,947.7 L838.8,914.7 L820.1,871.8 L810.1,820.2 L809.2,761.6 L817.4,697.7 L834.4,630.5 L859.7,562.0 L892.6,494.3 L932.1,429.4 L976.9,369.4 L1025.7,316.0 L1077.0,270.8 M941.6,990.4 L941.3,990.3 L913.8,971.6 L892.2,941.3 L877.2,900.2 L869.2,849.6 L868.5,791.1 L875.0,726.4 L888.7,657.5 L909.0,586.5 L935.4,515.6 L967.0,446.8 L1002.9,382.3 L1042.0,324.1 L1083.2,273.9 M993.9,1008.3 L987.6,1006.1 L967.8,990.0 L952.2,961.7 L941.3,922.0 L935.6,872.2 L935.0,813.7 L939.8,748.4 L949.6,678.2 L964.3,605.3 L983.4,531.9 L1006.2,460.1 L1032.2,392.3 L1060.4,330.4 L1090.1,276.3 M1043.6,1018.8 L1037.7,1016.5 L1026.0,1002.2 L1016.9,975.2 L1010.6,936.5 L1007.2,887.2 L1006.9,828.8 L1009.6,763.1 L1015.4,692.0 L1024.0,617.8 L1035.2,542.7 L1048.5,469.0 L1063.7,398.9 L1080.3,334.5 L1097.7,277.9 M1091.6,1023.3 L1089.8,1021.4 L1086.8,1007.8 L1084.4,981.5 L1082.7,943.2 L1081.9,894.2 L1081.8,835.8 L1082.5,769.9 L1084.0,698.4 L1086.3,623.6 L1089.2,547.8 L1092.7,473.1 L1096.6,402.0 L1101.0,336.5 L1105.5,278.6 M1139.3,1022.5 L1142.6,1020.6 L1148.2,1006.8 L1152.6,980.4 L1155.7,942.0 L1157.3,892.9 L1157.5,834.5 L1156.1,768.7 L1153.3,697.3 L1149.2,622.6 L1143.8,546.9 L1137.3,472.4 L1129.9,401.4 L1121.9,336.1 L1113.5,278.5 M1187.7,1016.3 L1194.2,1014.0 L1208.4,999.2 L1219.5,971.9 L1227.2,932.9 L1231.3,883.5 L1231.7,825.1 L1228.3,759.5 L1221.3,688.6 L1210.9,614.8 L1197.3,540.1 L1181.0,466.8 L1162.5,397.3 L1142.4,333.5 L1121.2,277.5 M1238.1,1003.8 L1243.3,1001.9 L1265.5,985.1 L1283.0,956.2 L1295.1,916.2 L1301.6,866.2 L1302.2,807.7 L1296.9,742.6 L1285.9,672.7 L1269.4,600.3 L1248.1,527.5 L1222.5,456.6 L1193.5,389.6 L1161.9,328.7 L1128.6,275.6 M1291.4,983.3 L1317.9,965.0 L1341.2,933.9 L1357.4,892.3 L1366.0,841.5 L1366.8,782.9 L1359.7,718.5 L1345.0,650.0 L1323.1,579.7 L1294.7,509.7 L1260.6,442.0 L1221.9,378.7 L1179.7,321.9 L1135.4,273.1 M1348.1,951.6 L1363.9,939.5 L1392.3,905.6 L1412.0,862.0 L1422.5,810.2 L1423.5,751.5 L1414.9,687.9 L1397.0,621.3 L1370.3,553.6 L1335.6,487.0 L1294.0,423.5 L1246.8,364.9 L1195.4,313.2 L1141.3,269.8 M1407.6,904.5 L1434.8,872.2 L1457.5,826.3 L1469.6,773.2 L1470.7,714.4 L1460.8,651.8 L1440.1,587.3 L1409.4,522.8 L1369.6,460.3 L1321.8,401.6 L1267.5,348.6 L1208.4,302.9 L1146.3,265.9 M1466.1,836.5 L1467.3,834.6 L1492.3,786.1 L1505.6,731.6 L1506.8,672.8 L1495.9,611.3 L1473.2,549.1 L1439.5,488.2 L1395.7,430.2 L1343.1,377.1 L1283.4,330.3 L1218.4,291.4 L1150.1,261.5 M1515.0,744.0 L1515.5,742.8 L1529.5,686.8 L1530.8,627.8 L1519.3,567.6 L1495.2,508.0 L1459.5,450.8 L1413.0,397.8 L1357.3,350.6 L1294.0,310.6 L1225.1,279.0 L1152.6,256.8 M1541.8,630.4 L1542.0,580.9 L1530.2,522.0 L1505.5,465.0 L1468.8,411.8 L1421.1,364.0 L1363.9,322.9 L1298.9,290.0 L1228.1,266.0 L1153.7,251.9 M1536.9,510.0 L1528.2,475.9 L1503.7,421.6 L1467.1,372.4 L1419.6,329.8 L1362.7,295.0 L1298.0,269.1 L1227.6,252.9 L1153.5,246.9 M1502.0,401.7 L1489.9,379.1 L1454.6,333.8 L1408.7,296.3 L1353.8,267.6 L1291.4,248.7 L1223.4,240.1 L1152.0,242.0 M1449.0,316.6 L1431.5,297.2 L1388.7,264.5 L1337.4,241.7 L1279.2,229.3 L1215.8,227.9 L1149.0,237.4 M1389.6,255.4 L1360.2,235.3 L1314.1,217.8 L1261.8,211.6 L1204.8,216.7 L1144.9,233.2 M1330.8,213.5 L1324.0,209.7 L1284.5,196.9 L1239.7,196.0 L1190.9,206.9 L1139.6,229.5 M1275.0,185.6 L1249.6,179.5 L1213.7,183.0 L1174.6,198.8 L1133.4,226.4 M1222.7,167.7 L1210.4,166.2 L1184.4,173.1 L1156.2,192.5 L1126.5,224.0 M1173.0,157.2 L1168.1,157.3 L1152.9,166.4 L1136.3,188.4 L1118.9,222.4 M1125.0,152.7 L1123.9,153.2 L1120.0,163.4 L1115.6,186.4 L1111.1,221.7" fill="none" stroke="#eef4ff" stroke-width="0.9" stroke-dasharray="6 1.5" opacity="0.5"/><defs><g id="landg"><polygon points="1119,167 1160,163 1210,172 1260,186 1310,201 1345,225 1372,249 1380,250 1420,300 1400,440 1330,470 1300,500 1290,520 1275,530 1262,528 1275,520 1262,505 1250,495 1237,487 1221,481 1198,473 1193,464 1182,451 1165,448 1162,427 1166,418 1168,401 1160,376 1154,354 1170,357 1193,363 1198,358 1203,349 1219,342 1223,333 1214,326 1212,317 1230,321 1239,326 1253,331 1258,325 1250,310 1240,296 1223,284 1221,270 1212,259 1203,247 1210,243 1228,245 1237,256 1230,238 1228,226 1235,224 1226,215 1210,206 1203,196 1191,187 1170,180 1156,166 1124,164"/><polygon points="1016,170 1038,165 1070,159 1092,156 1116,156 1110,162 1104,168 1093,173 1075,175 1060,178 1043,182"/><polygon points="899,206 960,184 1016,170 1042,182 1023,189 1014,202 1031,200 1038,210 1042,225 1055,240 1057,255 1035,259 1014,251 993,259 976,276 965,291 942,300 916,310 895,319 876,330 869,351 861,366 844,383 831,400 814,400 808,383 812,366 799,353 786,338 805,325 825,310 838,281 854,253 880,223"/><polygon points="899,206 880,223 854,253 838,281 825,310 805,325 786,338 799,353 812,366 808,383 790,380 780,374 773,373 759,379 745,381 734,385 715,388 700,360 760,280 860,190"/><polygon points="924,352 937,322 968,306 1006,265 1031,256 1057,268 1079,284 1072,296 1052,310 1044,324 1022,336 988,347 962,351 937,360 926,364"/><polygon points="1104,302 1118,298 1127,304 1122,316 1110,318"/><polygon points="1000,365 1012,360 1024,366 1022,380 1005,382"/><polygon points="684,575 690,570 695,600 696,618 688,628 682,634 677,620 680,600"/><polygon points="676,620 693,623 700,640 710,662 716,682 718,704 724,723 741,748 757,768 777,790 785,809 777,826 779,854 768,859 745,830 725,800 705,760 690,720 680,680 675,650"/><polygon points="697,497 703,505 700,515 696,510"/><polygon points="1110,362 1132,351 1152,351 1158,356 1143,357 1132,362 1121,384 1110,407 1096,420 1088,432 1080,437 1072,432 1071,428 1082,418 1099,401 1107,382 1116,371"/><polygon points="1132,362 1143,357 1150,360 1140,368 1135,390 1132,407 1129,424 1126,438 1122,446 1115,459 1108,457 1105,452 1108,434 1096,420 1110,407 1121,384"/><polygon points="1141,362 1152,357 1160,376 1168,401 1166,418 1143,423 1138,407 1138,384"/><polygon points="1030,432 1042,428 1046,445 1049,457 1052,476 1049,484 1021,489 1029,473 1027,457 1033,445"/><polygon points="1016,452 1027,450 1028,466 1015,468"/><polygon points="1018,501 1040,495 1058,488 1065,495 1073,498 1082,505 1079,517 1072,523 1073,531 1071,545 1054,548 1040,549 1032,543 1032,521 1029,507"/><polygon points="1058,488 1073,488 1073,498 1065,495"/><polygon points="1065,478 1075,478 1073,488 1065,487"/><polygon points="1075,467 1098,466 1107,469 1112,487 1109,495 1112,506 1107,517 1096,526 1082,517 1082,505 1073,498 1073,488 1075,478"/><polygon points="1097,453 1105,453 1106,466 1097,466"/><polygon points="1118,466 1137,460 1154,464 1157,478 1158,495 1154,503 1137,502 1129,499 1115,494 1112,487 1115,473"/><polygon points="1149.7,428 1162,427 1165,438 1166,456 1159,467 1146,462 1143,448 1148,437"/><polygon points="1165,448 1182,451 1193,464 1190,477 1173,481 1157,478 1154,464 1166,456"/><polygon points="1157,495 1158,481 1173,481 1190,477 1198,473 1221,481 1237,487 1237,503 1228,514 1218,526 1209,520 1193,514 1180,506 1155,506 1154,503"/><polygon points="1178,506 1187,512 1193,517 1187,527 1183,517"/><polygon points="1112,495 1126,498 1134,503 1126,509 1112,509 1111,503"/><polygon points="1107,512 1126,509 1126,520 1118,524 1107,523"/><polygon points="1072,519 1086,516 1090,526 1075,527"/><polygon points="1125,517 1140,512 1155,510 1152,523 1140,530 1126,526"/><polygon points="1152,514 1179,509 1187,527 1193,535 1187,542 1165,541 1151,534 1147,526"/><polygon points="1137,528 1150,530 1158,539 1158,553 1146,552 1140,542"/><polygon points="1123,535 1139,534 1140,546 1132,545"/><polygon points="1158,542 1190,542 1193,558 1165,559 1158,553"/><polygon points="1073,530 1090,526 1107,523 1118,526 1112,531 1100,534 1101,545 1109,553 1123,568 1135,569 1138,574 1131,577 1129,581 1125,588 1122,590 1121,584 1123,580 1120,573 1111,566 1104,559 1096,548 1086,539 1076,538"/><polygon points="1104,591 1114,589 1120,588 1118,597 1112,598 1106,596"/><polygon points="1079,565 1086,564 1087,573 1085,582 1080,581"/><polygon points="993,534 1021,540 1052,554 1046,571 1029,582 1013,587 993,593 988,571 991,551"/><polygon points="985,542 993,534 991,551 988,571 993,593 985,590 983,560"/><polygon points="1148,574 1154,564 1164,560 1175,560 1169,566 1164,572 1172,584 1167,591 1162,597 1158,589 1152,581"/><polygon points="1171,605 1180,604 1188,605 1186,608 1172,608"/><polygon points="1182,565 1204,551 1238,546 1262,540 1282,548 1288,564 1267,565 1250,572 1227,584 1196,587 1185,579"/><polygon points="1232,601 1240,599 1238,605"/><polygon points="1302,418 1316,390 1360,384 1387,380 1392,397 1395,413 1393,423 1403,440 1398,455 1380,450 1379,479 1343,473 1318,479 1310,498 1296,484 1282,484 1268,482 1266,468 1271,454 1299,446 1302,430"/><polygon points="1354,254 1374,251 1404,279 1427,301 1441,318 1460,334 1482,362 1497,380 1503,405 1517,447 1525,473 1517,477 1503,463 1497,450 1487,452 1487,473 1483,487 1477,495 1457,502 1440,503 1430,500 1425,483 1413,473 1405,460 1403,440 1393,423 1395,413 1388,402 1392,397 1387,380 1386,376 1407,384 1427,379 1435,357 1427,334 1410,318 1391,307 1382,290"/><polygon points="1382,290 1391,307 1410,318 1427,334 1435,357 1427,379 1407,384 1385,376 1382,354 1377,332 1388,318"/><polygon points="1318,479 1343,473 1380,480 1388,500 1382,500 1320,500"/><polygon points="1320,500 1382,500 1382,514 1373,536 1358,530 1341,531 1334,546 1327,528 1320,522"/><polygon points="1380,450 1398,455 1405,475 1408,503 1398,500 1390,490 1385,470"/><polygon points="1382,512 1411,507 1412,536 1406,554 1390,575 1380,555 1373,536 1382,514"/><polygon points="1408,490 1425,483 1433,500 1438,523 1437,547 1432,562 1443,579 1430,600 1402,604 1404,590 1390,575 1406,554 1412,536 1411,507"/><polygon points="1425,483 1440,503 1457,502 1477,495 1483,487 1487,473 1487,452 1497,450 1503,463 1508,470 1503,490 1505,520 1502,537 1502,573 1504,607 1496,634 1493,651 1482,643 1466,607 1454,590 1441,598 1432,590 1443,579 1432,562 1437,547 1438,523 1433,500"/><polygon points="1492,493 1500,490 1503,505 1503,522 1495,515"/><polygon points="1490,450 1497,450 1508,470 1517,480 1528,500 1535,527 1530,535 1520,520 1510,500 1503,490 1500,475"/><polygon points="1517,477 1525,473 1532,490 1538,510 1540,532 1535,527 1528,500"/><polygon points="1482,478 1490,479 1487,487 1481,486"/><polygon points="1282,548 1288,564 1301,577 1320,600 1327,605 1339,606 1358,617 1370,608 1385,606 1402,603 1404,590 1389,575 1380,555 1373,536 1358,530 1341,531 1334,546 1322,551 1308,539 1298,533 1286,536 1280,543"/><polygon points="1275,535 1290,534 1293,549 1280,548"/><polygon points="1250,526 1280,528 1281,536 1262,538"/><polygon points="1267,565 1286,566 1301,577 1320,600 1322,611 1308,618 1269,611 1264,590"/><polygon points="1250,572 1264,568 1267,565 1264,590 1269,611 1255,606"/><polygon points="1256,604 1266,600 1268,622 1258,625"/><polygon points="1266,613 1270,653 1286,684 1303,707 1314,713 1323,704 1346,691 1368,676 1379,658 1374,644 1359,642 1334,636 1326,618 1300,614 1277,609"/><polygon points="1357,638 1376,637 1377,647 1360,646"/><polygon points="1374,624 1401,629 1399,653 1381,687 1368,676 1379,658"/><polygon points="1314,709 1346,691 1368,676 1374,689 1354,713 1326,740 1319,736"/><polygon points="1501,634 1508,632 1513,650 1506,657"/><polygon points="903,680 922,657 940,641 959,634 973,613 994,595 1010,599 1017,622 998,629 982,634 963,646 943,653 926,666 917,683"/><polygon points="916,684 929,667 943,656 950,660 935,675 926,688"/><polygon points="903,683 926,687 929,666 940,657 945,653 963,648 982,673 973,673 973,741 926,734 903,720 901,699"/><polygon points="963,648 982,634 998,629 1017,622 1019,602 1072,597 1082,648 1095,697 1042,727 1035,727 1031,720 980,671"/><polygon points="1074,618 1090,596 1096,629 1082,646"/><polygon points="1082,646 1093,629 1122,632 1150,643 1154,628 1169,627 1184,632 1185,721 1121,701 1096,698 1082,679"/><polygon points="1184,632 1211,633 1242,625 1236,640 1252,687 1249,696 1191,701 1185,662"/><polygon points="973,673 980,671 1031,720 1042,727 1040,752 1010,757 980,761 959,775 950,766 931,752 926,734 973,741"/><polygon points="1040,752 1042,727 1096,698 1121,701 1124,740 1116,765 1110,771 1041,768 1018,768 1010,757"/><polygon points="1121,701 1185,721 1182,740 1177,762 1177,782 1154,796 1124,804 1116,784 1110,771 1116,765 1124,740"/><polygon points="1185,707 1249,696 1252,687 1262,710 1275,736 1268,749 1257,789 1249,765 1227,787 1196,793 1177,782 1177,762 1182,740"/><polygon points="1275,736 1294,724 1319,744 1315,753 1279,742"/><polygon points="1196,793 1227,787 1249,765 1262,772 1262,823 1238,821 1210,804"/><polygon points="1257,789 1268,749 1279,742 1315,753 1323,760 1354,764 1341,780 1319,802 1297,809 1263,807"/><polygon points="1359,736 1370,727 1368,753 1350,780 1326,804 1314,820 1300,830 1319,802 1341,780 1354,764"/><polygon points="894,724 910,717 926,734 924,748 898,748"/><polygon points="912,752 931,752 950,766 950,782 933,782 922,771"/><polygon points="917,773 933,782 938,789 926,792"/><polygon points="950,775 970,778 987,782 987,812 952,808 938,794"/><polygon points="970,775 980,761 1010,757 1019,761 1028,775 1012,782 987,782"/><polygon points="987,782 1010,778 1014,812 987,812"/><polygon points="1010,780 1028,775 1035,770 1035,815 1014,812"/><polygon points="1035,771 1107,771 1116,784 1096,815 1077,818 1071,829 1043,821 1035,815"/><polygon points="1116,784 1124,804 1127,846 1110,846 1104,848 1074,851 1071,829 1077,818 1096,815"/><polygon points="1124,804 1154,796 1196,793 1210,804 1238,821 1149,826 1138,834 1127,846"/><polygon points="1074,851 1104,848 1113,865 1102,884 1096,884 1082,873"/><polygon points="1104,848 1110,846 1127,846 1138,834 1149,826 1141,834 1132,876 1110,882 1102,884 1113,865"/><polygon points="1149,826 1238,821 1238,846 1227,859 1227,879 1238,893 1221,901 1188,915 1174,907 1171,898 1154,898 1124,896 1104,890 1110,882 1132,876 1141,834"/><polygon points="1238,821 1262,823 1262,848 1242,850"/><polygon points="1262,810 1271,809 1310,809 1313,832 1302,854 1288,848 1262,846"/><polygon points="1227,859 1242,850 1262,848 1288,848 1302,857 1299,879 1302,890 1260,901 1254,896 1238,893 1227,879"/><polygon points="1104,890 1124,896 1154,898 1171,898 1174,907 1174,915 1185,916 1172,926 1172,945 1154,948 1096,946 1102,929"/><polygon points="1188,915 1221,901 1254,896 1257,912 1232,929 1202,940 1185,946 1172,945 1172,926 1185,916"/><polygon points="1257,905 1264,900 1268,925 1260,930"/><polygon points="1096,946 1160,948 1157,984 1138,987 1118,976 1104,962"/><polygon points="1160,948 1185,946 1202,944 1207,959 1191,971 1157,984"/><polygon points="1202,944 1202,940 1232,929 1240,935 1238,957 1207,959"/><polygon points="1118,976 1138,987 1157,984 1191,971 1207,959 1238,957 1238,971 1210,990 1182,996 1141,1001 1132,987"/><polygon points="1232,929 1257,912 1262,908 1302,890 1304,907 1282,923 1260,940 1238,971 1238,957 1240,935"/><polygon points="1324,907 1357,882 1343,918 1327,934 1318,929"/><polygon points="1138,461 1150,460 1150,466 1140,466"/><polygon points="1127,506 1154,503 1155,509 1140,512 1127,513"/><polygon points="1115,531 1137,530 1129,535 1140,548 1126,545 1118,537"/><polygon points="1142,550 1148,552 1150,566 1144,566"/><polygon points="926,792 938,789 952,808 945,812 935,800"/><polygon points="1184,289 1192,292 1198,310 1196,330 1188,322 1185,305"/><polygon points="1176,251 1196,250 1194,260 1179,261"/><polygon points="1149,276 1161,278 1158,288 1150,287"/><polygon points="1186,207 1205,211 1203,218 1188,218"/><polygon points="720,386 724,387 711,427 708,427"/><polygon points="1079,556 1083,555 1083,562 1080,562"/><polygon points="1319,753 1359,736 1354,764 1323,760"/><polygon points="1312,745 1320,745 1321,755 1313,756"/><polygon points="879,531 883,531 883,534 879,534"/><polygon points="885,532 888,532 888,535 885,535"/><polygon points="890,543 894,543 894,546 890,546"/><polygon points="922,597 925,597 925,600 922,600"/><polygon points="909,625 912,624 912,628"/><polygon points="916,630 919,629 920,633"/><polygon points="931,631 935,629 935,635"/><polygon points="848,688 851,688 851,691 848,691"/><polygon points="1420,268 1426,272 1424,280 1418,276"/><polygon points="900,749 912,750 912,756 902,756"/></g><filter id="hD" x="-20%" y="-20%" width="140%" height="140%"><feGaussianBlur stdDeviation="7"/></filter><filter id="hL" x="-20%" y="-20%" width="140%" height="140%"><feGaussianBlur stdDeviation="2.5"/></filter></defs><use href="#landg" transform="translate(2 3)" fill="#1a3a6a" stroke="#1a3a6a" stroke-width="22" stroke-linejoin="round" opacity="0.6" filter="url(#hD)"/><use href="#landg" fill="#94a6bc" stroke="#94a6bc" stroke-width="9" stroke-linejoin="round" opacity="1" filter="url(#hL)"/><use href="#landg" fill="#7a7a78" stroke="#7a7a78" stroke-width="5.2" stroke-linejoin="round"/><polygon points="1119,167 1160,163 1210,172 1260,186 1310,201 1345,225 1372,249 1380,250 1420,300 1400,440 1330,470 1300,500 1290,520 1275,530 1262,528 1275,520 1262,505 1250,495 1237,487 1221,481 1198,473 1193,464 1182,451 1165,448 1162,427 1166,418 1168,401 1160,376 1154,354 1170,357 1193,363 1198,358 1203,349 1219,342 1223,333 1214,326 1212,317 1230,321 1239,326 1253,331 1258,325 1250,310 1240,296 1223,284 1221,270 1212,259 1203,247 1210,243 1228,245 1237,256 1230,238 1228,226 1235,224 1226,215 1210,206 1203,196 1191,187 1170,180 1156,166 1124,164" fill="#5ebcd8" stroke="#5ebcd8" stroke-width="3.4" stroke-linejoin="round"/><polygon points="1016,170 1038,165 1070,159 1092,156 1116,156 1110,162 1104,168 1093,173 1075,175 1060,178 1043,182" fill="#62d466" stroke="#62d466" stroke-width="3.4" stroke-linejoin="round"/><polygon points="899,206 960,184 1016,170 1042,182 1023,189 1014,202 1031,200 1038,210 1042,225 1055,240 1057,255 1035,259 1014,251 993,259 976,276 965,291 942,300 916,310 895,319 876,330 869,351 861,366 844,383 831,400 814,400 808,383 812,366 799,353 786,338 805,325 825,310 838,281 854,253 880,223" fill="#e61e5f" stroke="#e61e5f" stroke-width="3.4" stroke-linejoin="round"/><polygon points="899,206 880,223 854,253 838,281 825,310 805,325 786,338 799,353 812,366 808,383 790,380 780,374 773,373 759,379 745,381 734,385 715,388 700,360 760,280 860,190" fill="#62d466" stroke="#62d466" stroke-width="3.4" stroke-linejoin="round"/><polygon points="924,352 937,322 968,306 1006,265 1031,256 1057,268 1079,284 1072,296 1052,310 1044,324 1022,336 988,347 962,351 937,360 926,364" fill="#e0ae58" stroke="#e0ae58" stroke-width="3.4" stroke-linejoin="round"/><polygon points="1104,302 1118,298 1127,304 1122,316 1110,318" fill="#e0ae58" stroke="#e0ae58" stroke-width="3.4" stroke-linejoin="round"/><polygon points="1000,365 1012,360 1024,366 1022,380 1005,382" fill="#62d466" stroke="#62d466" stroke-width="3.4" stroke-linejoin="round"/><polygon points="684,575 690,570 695,600 696,618 688,628 682,634 677,620 680,600" fill="#8040e8" stroke="#8040e8" stroke-width="3.4" stroke-linejoin="round"/><polygon points="676,620 693,623 700,640 710,662 716,682 718,704 724,723 741,748 757,768 777,790 785,809 777,826 779,854 768,859 745,830 725,800 705,760 690,720 680,680 675,650" fill="#c8d050" stroke="#c8d050" stroke-width="3.4" stroke-linejoin="round"/><polygon points="697,497 703,505 700,515 696,510" fill="#c8d040" stroke="#c8d040" stroke-width="3.4" stroke-linejoin="round"/><polygon points="1110,362 1132,351 1152,351 1158,356 1143,357 1132,362 1121,384 1110,407 1096,420 1088,432 1080,437 1072,432 1071,428 1082,418 1099,401 1107,382 1116,371" fill="#e0ae58" stroke="#e0ae58" stroke-width="3.4" stroke-linejoin="round"/><polygon points="1132,362 1143,357 1150,360 1140,368 1135,390 1132,407 1129,424 1126,438 1122,446 1115,459 1108,457 1105,452 1108,434 1096,420 1110,407 1121,384" fill="#1a98cc" stroke="#1a98cc" stroke-width="3.4" stroke-linejoin="round"/><polygon points="1141,362 1152,357 1160,376 1168,401 1166,418 1143,423 1138,407 1138,384" fill="#8a1ee8" stroke="#8a1ee8" stroke-width="3.4" stroke-linejoin="round"/><polygon points="1030,432 1042,428 1046,445 1049,457 1052,476 1049,484 1021,489 1029,473 1027,457 1033,445" fill="#8020e0" stroke="#8020e0" stroke-width="3.4" stroke-linejoin="round"/><polygon points="1016,452 1027,450 1028,466 1015,468" fill="#8020e0" stroke="#8020e0" stroke-width="3.4" stroke-linejoin="round"/><polygon points="1018,501 1040,495 1058,488 1065,495 1073,498 1082,505 1079,517 1072,523 1073,531 1071,545 1054,548 1040,549 1032,543 1032,521 1029,507" fill="#3a80e0" stroke="#3a80e0" stroke-width="3.4" stroke-linejoin="round"/><polygon points="1058,488 1073,488 1073,498 1065,495" fill="#e8d848" stroke="#e8d848" stroke-width="3.4" stroke-linejoin="round"/><polygon points="1065,478 1075,478 1073,488 1065,487" fill="#b8e020" stroke="#b8e020" stroke-width="3.4" stroke-linejoin="round"/><polygon points="1075,467 1098,466 1107,469 1112,487 1109,495 1112,506 1107,517 1096,526 1082,517 1082,505 1073,498 1073,488 1075,478" fill="#d09878" stroke="#d09878" stroke-width="3.4" stroke-linejoin="round"/><polygon points="1097,453 1105,453 1106,466 1097,466" fill="#d8c050" stroke="#d8c050" stroke-width="3.4" stroke-linejoin="round"/><polygon points="1118,466 1137,460 1154,464 1157,478 1158,495 1154,503 1137,502 1129,499 1115,494 1112,487 1115,473" fill="#7890d8" stroke="#7890d8" stroke-width="3.4" stroke-linejoin="round"/><polygon points="1149.7,428 1162,427 1165,438 1166,456 1159,467 1146,462 1143,448 1148,437" fill="#40e040" stroke="#40e040" stroke-width="3.4" stroke-linejoin="round"/><polygon points="1165,448 1182,451 1193,464 1190,477 1173,481 1157,478 1154,464 1166,456" fill="#e8d890" stroke="#e8d890" stroke-width="3.4" stroke-linejoin="round"/><polygon points="1157,495 1158,481 1173,481 1190,477 1198,473 1221,481 1237,487 1237,503 1228,514 1218,526 1209,520 1193,514 1180,506 1155,506 1154,503" fill="#a860e8" stroke="#a860e8" stroke-width="3.4" stroke-linejoin="round"/><polygon points="1178,506 1187,512 1193,517 1187,527 1183,517" fill="#e04030" stroke="#e04030" stroke-width="3.4" stroke-linejoin="round"/><polygon points="1112,495 1126,498 1134,503 1126,509 1112,509 1111,503" fill="#60e060" stroke="#60e060" stroke-width="3.4" stroke-linejoin="round"/><polygon points="1107,512 1126,509 1126,520 1118,524 1107,523" fill="#c0e888" stroke="#c0e888" stroke-width="3.4" stroke-linejoin="round"/><polygon points="1072,519 1086,516 1090,526 1075,527" fill="#50d8a0" stroke="#50d8a0" stroke-width="3.4" stroke-linejoin="round"/><polygon points="1125,517 1140,512 1155,510 1152,523 1140,530 1126,526" fill="#c8b050" stroke="#c8b050" stroke-width="3.4" stroke-linejoin="round"/><polygon points="1152,514 1179,509 1187,527 1193,535 1187,542 1165,541 1151,534 1147,526" fill="#48a8c8" stroke="#48a8c8" stroke-width="3.4" stroke-linejoin="round"/><polygon points="1137,528 1150,530 1158,539 1158,553 1146,552 1140,542" fill="#d0e890" stroke="#d0e890" stroke-width="3.4" stroke-linejoin="round"/><polygon points="1123,535 1139,534 1140,546 1132,545" fill="#40e0c0" stroke="#40e0c0" stroke-width="3.4" stroke-linejoin="round"/><polygon points="1158,542 1190,542 1193,558 1165,559 1158,553" fill="#d0e080" stroke="#d0e080" stroke-width="3.4" stroke-linejoin="round"/><polygon points="1073,530 1090,526 1107,523 1118,526 1112,531 1100,534 1101,545 1109,553 1123,568 1135,569 1138,574 1131,577 1129,581 1125,588 1122,590 1121,584 1123,580 1120,573 1111,566 1104,559 1096,548 1086,539 1076,538" fill="#20e0f0" stroke="#20e0f0" stroke-width="3.4" stroke-linejoin="round"/><polygon points="1104,591 1114,589 1120,588 1118,597 1112,598 1106,596" fill="#20e0f0" stroke="#20e0f0" stroke-width="3.4" stroke-linejoin="round"/><polygon points="1079,565 1086,564 1087,573 1085,582 1080,581" fill="#20e0f0" stroke="#20e0f0" stroke-width="3.4" stroke-linejoin="round"/><polygon points="993,534 1021,540 1052,554 1046,571 1029,582 1013,587 993,593 988,571 991,551" fill="#60e8c8" stroke="#60e8c8" stroke-width="3.4" stroke-linejoin="round"/><polygon points="985,542 993,534 991,551 988,571 993,593 985,590 983,560" fill="#60e8c8" stroke="#60e8c8" stroke-width="3.4" stroke-linejoin="round"/><polygon points="1148,574 1154,564 1164,560 1175,560 1169,566 1164,572 1172,584 1167,591 1162,597 1158,589 1152,581" fill="#e08040" stroke="#e08040" stroke-width="3.4" stroke-linejoin="round"/><polygon points="1171,605 1180,604 1188,605 1186,608 1172,608" fill="#e08040" stroke="#e08040" stroke-width="3.4" stroke-linejoin="round"/><polygon points="1182,565 1204,551 1238,546 1262,540 1282,548 1288,564 1267,565 1250,572 1227,584 1196,587 1185,579" fill="#e858c0" stroke="#e858c0" stroke-width="3.4" stroke-linejoin="round"/><polygon points="1232,601 1240,599 1238,605" fill="#e850c8" stroke="#e850c8" stroke-width="3.4" stroke-linejoin="round"/><polygon points="1302,418 1316,390 1360,384 1387,380 1392,397 1395,413 1393,423 1403,440 1398,455 1380,450 1379,479 1343,473 1318,479 1310,498 1296,484 1282,484 1268,482 1266,468 1271,454 1299,446 1302,430" fill="#72d41e" stroke="#72d41e" stroke-width="3.4" stroke-linejoin="round"/><polygon points="1354,254 1374,251 1404,279 1427,301 1441,318 1460,334 1482,362 1497,380 1503,405 1517,447 1525,473 1517,477 1503,463 1497,450 1487,452 1487,473 1483,487 1477,495 1457,502 1440,503 1430,500 1425,483 1413,473 1405,460 1403,440 1393,423 1395,413 1388,402 1392,397 1387,380 1386,376 1407,384 1427,379 1435,357 1427,334 1410,318 1391,307 1382,290" fill="#e0621e" stroke="#e0621e" stroke-width="3.4" stroke-linejoin="round"/><polygon points="1382,290 1391,307 1410,318 1427,334 1435,357 1427,379 1407,384 1385,376 1382,354 1377,332 1388,318" fill="#e0268e" stroke="#e0268e" stroke-width="3.4" stroke-linejoin="round"/><polygon points="1318,479 1343,473 1380,480 1388,500 1382,500 1320,500" fill="#d07060" stroke="#d07060" stroke-width="3.4" stroke-linejoin="round"/><polygon points="1320,500 1382,500 1382,514 1373,536 1358,530 1341,531 1334,546 1327,528 1320,522" fill="#b0cc88" stroke="#b0cc88" stroke-width="3.4" stroke-linejoin="round"/><polygon points="1380,450 1398,455 1405,475 1408,503 1398,500 1390,490 1385,470" fill="#4a78d0" stroke="#4a78d0" stroke-width="3.4" stroke-linejoin="round"/><polygon points="1382,512 1411,507 1412,536 1406,554 1390,575 1380,555 1373,536 1382,514" fill="#a8d018" stroke="#a8d018" stroke-width="3.4" stroke-linejoin="round"/><polygon points="1408,490 1425,483 1433,500 1438,523 1437,547 1432,562 1443,579 1430,600 1402,604 1404,590 1390,575 1406,554 1412,536 1411,507" fill="#d84838" stroke="#d84838" stroke-width="3.4" stroke-linejoin="round"/><polygon points="1425,483 1440,503 1457,502 1477,495 1483,487 1487,473 1487,452 1497,450 1503,463 1508,470 1503,490 1505,520 1502,537 1502,573 1504,607 1496,634 1493,651 1482,643 1466,607 1454,590 1441,598 1432,590 1443,579 1432,562 1437,547 1438,523 1433,500" fill="#30c8d8" stroke="#30c8d8" stroke-width="3.4" stroke-linejoin="round"/><polygon points="1492,493 1500,490 1503,505 1503,522 1495,515" fill="#4040d8" stroke="#4040d8" stroke-width="3.4" stroke-linejoin="round"/><polygon points="1490,450 1497,450 1508,470 1517,480 1528,500 1535,527 1530,535 1520,520 1510,500 1503,490 1500,475" fill="#e020c8" stroke="#e020c8" stroke-width="3.4" stroke-linejoin="round"/><polygon points="1517,477 1525,473 1532,490 1538,510 1540,532 1535,527 1528,500" fill="#e07040" stroke="#e07040" stroke-width="3.4" stroke-linejoin="round"/><polygon points="1482,478 1490,479 1487,487 1481,486" fill="#e07090" stroke="#e07090" stroke-width="3.4" stroke-linejoin="round"/><polygon points="1282,548 1288,564 1301,577 1320,600 1327,605 1339,606 1358,617 1370,608 1385,606 1402,603 1404,590 1389,575 1380,555 1373,536 1358,530 1341,531 1334,546 1322,551 1308,539 1298,533 1286,536 1280,543" fill="#80b4dc" stroke="#80b4dc" stroke-width="3.4" stroke-linejoin="round"/><polygon points="1275,535 1290,534 1293,549 1280,548" fill="#4898e0" stroke="#4898e0" stroke-width="3.4" stroke-linejoin="round"/><polygon points="1250,526 1280,528 1281,536 1262,538" fill="#e05060" stroke="#e05060" stroke-width="3.4" stroke-linejoin="round"/><polygon points="1267,565 1286,566 1301,577 1320,600 1322,611 1308,618 1269,611 1264,590" fill="#d05010" stroke="#d05010" stroke-width="3.4" stroke-linejoin="round"/><polygon points="1250,572 1264,568 1267,565 1264,590 1269,611 1255,606" fill="#40e020" stroke="#40e020" stroke-width="3.4" stroke-linejoin="round"/><polygon points="1256,604 1266,600 1268,622 1258,625" fill="#2060d0" stroke="#2060d0" stroke-width="3.4" stroke-linejoin="round"/><polygon points="1266,613 1270,653 1286,684 1303,707 1314,713 1323,704 1346,691 1368,676 1379,658 1374,644 1359,642 1334,636 1326,618 1300,614 1277,609" fill="#d840d8" stroke="#d840d8" stroke-width="3.4" stroke-linejoin="round"/><polygon points="1357,638 1376,637 1377,647 1360,646" fill="#b050d0" stroke="#b050d0" stroke-width="3.4" stroke-linejoin="round"/><polygon points="1374,624 1401,629 1399,653 1381,687 1368,676 1379,658" fill="#20e040" stroke="#20e040" stroke-width="3.4" stroke-linejoin="round"/><polygon points="1314,709 1346,691 1368,676 1374,689 1354,713 1326,740 1319,736" fill="#20b0c8" stroke="#20b0c8" stroke-width="3.4" stroke-linejoin="round"/><polygon points="1501,634 1508,632 1513,650 1506,657" fill="#50d040" stroke="#50d040" stroke-width="3.4" stroke-linejoin="round"/><polygon points="903,680 922,657 940,641 959,634 973,613 994,595 1010,599 1017,622 998,629 982,634 963,646 943,653 926,666 917,683" fill="#5050e0" stroke="#5050e0" stroke-width="3.4" stroke-linejoin="round"/><polygon points="916,684 929,667 943,656 950,660 935,675 926,688" fill="#e040b0" stroke="#e040b0" stroke-width="3.4" stroke-linejoin="round"/><polygon points="903,683 926,687 929,666 940,657 945,653 963,648 982,673 973,673 973,741 926,734 903,720 901,699" fill="#e06880" stroke="#e06880" stroke-width="3.4" stroke-linejoin="round"/><polygon points="963,648 982,634 998,629 1017,622 1019,602 1072,597 1082,648 1095,697 1042,727 1035,727 1031,720 980,671" fill="#d08018" stroke="#d08018" stroke-width="3.4" stroke-linejoin="round"/><polygon points="1074,618 1090,596 1096,629 1082,646" fill="#e048c8" stroke="#e048c8" stroke-width="3.4" stroke-linejoin="round"/><polygon points="1082,646 1093,629 1122,632 1150,643 1154,628 1169,627 1184,632 1185,721 1121,701 1096,698 1082,679" fill="#48dca8" stroke="#48dca8" stroke-width="3.4" stroke-linejoin="round"/><polygon points="1184,632 1211,633 1242,625 1236,640 1252,687 1249,696 1191,701 1185,662" fill="#e07cd0" stroke="#e07cd0" stroke-width="3.4" stroke-linejoin="round"/><polygon points="973,673 980,671 1031,720 1042,727 1040,752 1010,757 980,761 959,775 950,766 931,752 926,734 973,741" fill="#d87028" stroke="#d87028" stroke-width="3.4" stroke-linejoin="round"/><polygon points="1040,752 1042,727 1096,698 1121,701 1124,740 1116,765 1110,771 1041,768 1018,768 1010,757" fill="#48c818" stroke="#48c818" stroke-width="3.4" stroke-linejoin="round"/><polygon points="1121,701 1185,721 1182,740 1177,762 1177,782 1154,796 1124,804 1116,784 1110,771 1116,765 1124,740" fill="#c850a8" stroke="#c850a8" stroke-width="3.4" stroke-linejoin="round"/><polygon points="1185,707 1249,696 1252,687 1262,710 1275,736 1268,749 1257,789 1249,765 1227,787 1196,793 1177,782 1177,762 1182,740" fill="#a8d848" stroke="#a8d848" stroke-width="3.4" stroke-linejoin="round"/><polygon points="1275,736 1294,724 1319,744 1315,753 1279,742" fill="#60c0e0" stroke="#60c0e0" stroke-width="3.4" stroke-linejoin="round"/><polygon points="1196,793 1227,787 1249,765 1262,772 1262,823 1238,821 1210,804" fill="#48d018" stroke="#48d018" stroke-width="3.4" stroke-linejoin="round"/><polygon points="1257,789 1268,749 1279,742 1315,753 1323,760 1354,764 1341,780 1319,802 1297,809 1263,807" fill="#80d8a0" stroke="#80d8a0" stroke-width="3.4" stroke-linejoin="round"/><polygon points="1359,736 1370,727 1368,753 1350,780 1326,804 1314,820 1300,830 1319,802 1341,780 1354,764" fill="#e89830" stroke="#e89830" stroke-width="3.4" stroke-linejoin="round"/><polygon points="894,724 910,717 926,734 924,748 898,748" fill="#40d0e0" stroke="#40d0e0" stroke-width="3.4" stroke-linejoin="round"/><polygon points="912,752 931,752 950,766 950,782 933,782 922,771" fill="#e8e848" stroke="#e8e848" stroke-width="3.4" stroke-linejoin="round"/><polygon points="917,773 933,782 938,789 926,792" fill="#a080e0" stroke="#a080e0" stroke-width="3.4" stroke-linejoin="round"/><polygon points="950,775 970,778 987,782 987,812 952,808 938,794" fill="#e040e0" stroke="#e040e0" stroke-width="3.4" stroke-linejoin="round"/><polygon points="970,775 980,761 1010,757 1019,761 1028,775 1012,782 987,782" fill="#60c888" stroke="#60c888" stroke-width="3.4" stroke-linejoin="round"/><polygon points="987,782 1010,778 1014,812 987,812" fill="#6080c8" stroke="#6080c8" stroke-width="3.4" stroke-linejoin="round"/><polygon points="1010,780 1028,775 1035,770 1035,815 1014,812" fill="#50d8d0" stroke="#50d8d0" stroke-width="3.4" stroke-linejoin="round"/><polygon points="1035,771 1107,771 1116,784 1096,815 1077,818 1071,829 1043,821 1035,815" fill="#7030e8" stroke="#7030e8" stroke-width="3.4" stroke-linejoin="round"/><polygon points="1116,784 1124,804 1127,846 1110,846 1104,848 1074,851 1071,829 1077,818 1096,815" fill="#d850e8" stroke="#d850e8" stroke-width="3.4" stroke-linejoin="round"/><polygon points="1124,804 1154,796 1196,793 1210,804 1238,821 1149,826 1138,834 1127,846" fill="#e04890" stroke="#e04890" stroke-width="3.4" stroke-linejoin="round"/><polygon points="1074,851 1104,848 1113,865 1102,884 1096,884 1082,873" fill="#e030b0" stroke="#e030b0" stroke-width="3.4" stroke-linejoin="round"/><polygon points="1104,848 1110,846 1127,846 1138,834 1149,826 1141,834 1132,876 1110,882 1102,884 1113,865" fill="#e888a8" stroke="#e888a8" stroke-width="3.4" stroke-linejoin="round"/><polygon points="1149,826 1238,821 1238,846 1227,859 1227,879 1238,893 1221,901 1188,915 1174,907 1171,898 1154,898 1124,896 1104,890 1110,882 1132,876 1141,834" fill="#30c850" stroke="#30c850" stroke-width="3.4" stroke-linejoin="round"/><polygon points="1238,821 1262,823 1262,848 1242,850" fill="#e83050" stroke="#e83050" stroke-width="3.4" stroke-linejoin="round"/><polygon points="1262,810 1271,809 1310,809 1313,832 1302,854 1288,848 1262,846" fill="#8050e0" stroke="#8050e0" stroke-width="3.4" stroke-linejoin="round"/><polygon points="1227,859 1242,850 1262,848 1288,848 1302,857 1299,879 1302,890 1260,901 1254,896 1238,893 1227,879" fill="#d09060" stroke="#d09060" stroke-width="3.4" stroke-linejoin="round"/><polygon points="1104,890 1124,896 1154,898 1171,898 1174,907 1174,915 1185,916 1172,926 1172,945 1154,948 1096,946 1102,929" fill="#60d060" stroke="#60d060" stroke-width="3.4" stroke-linejoin="round"/><polygon points="1188,915 1221,901 1254,896 1257,912 1232,929 1202,940 1185,946 1172,945 1172,926 1185,916" fill="#c858e8" stroke="#c858e8" stroke-width="3.4" stroke-linejoin="round"/><polygon points="1257,905 1264,900 1268,925 1260,930" fill="#e020e0" stroke="#e020e0" stroke-width="3.4" stroke-linejoin="round"/><polygon points="1096,946 1160,948 1157,984 1138,987 1118,976 1104,962" fill="#c8e860" stroke="#c8e860" stroke-width="3.4" stroke-linejoin="round"/><polygon points="1160,948 1185,946 1202,944 1207,959 1191,971 1157,984" fill="#e07030" stroke="#e07030" stroke-width="3.4" stroke-linejoin="round"/><polygon points="1202,944 1202,940 1232,929 1240,935 1238,957 1207,959" fill="#40e060" stroke="#40e060" stroke-width="3.4" stroke-linejoin="round"/><polygon points="1118,976 1138,987 1157,984 1191,971 1207,959 1238,957 1238,971 1210,990 1182,996 1141,1001 1132,987" fill="#40c8a0" stroke="#40c8a0" stroke-width="3.4" stroke-linejoin="round"/><polygon points="1232,929 1257,912 1262,908 1302,890 1304,907 1282,923 1260,940 1238,971 1238,957 1240,935" fill="#2060e0" stroke="#2060e0" stroke-width="3.4" stroke-linejoin="round"/><polygon points="1324,907 1357,882 1343,918 1327,934 1318,929" fill="#40b0e0" stroke="#40b0e0" stroke-width="3.4" stroke-linejoin="round"/><polygon points="1138,461 1150,460 1150,466 1140,466" fill="#48b0e0" stroke="#48b0e0" stroke-width="3.4" stroke-linejoin="round"/><polygon points="1127,506 1154,503 1155,509 1140,512 1127,513" fill="#c8b860" stroke="#c8b860" stroke-width="3.4" stroke-linejoin="round"/><polygon points="1115,531 1137,530 1129,535 1140,548 1126,545 1118,537" fill="#5060d8" stroke="#5060d8" stroke-width="3.4" stroke-linejoin="round"/><polygon points="1142,550 1148,552 1150,566 1144,566" fill="#e8e048" stroke="#e8e048" stroke-width="3.4" stroke-linejoin="round"/><polygon points="926,792 938,789 952,808 945,812 935,800" fill="#e08030" stroke="#e08030" stroke-width="3.4" stroke-linejoin="round"/><polygon points="1184,289 1192,292 1198,310 1196,330 1188,322 1185,305" fill="#5ebcd8" stroke="#5ebcd8" stroke-width="3.4" stroke-linejoin="round"/><polygon points="1176,251 1196,250 1194,260 1179,261" fill="#5ebcd8" stroke="#5ebcd8" stroke-width="3.4" stroke-linejoin="round"/><polygon points="1149,276 1161,278 1158,288 1150,287" fill="#5ebcd8" stroke="#5ebcd8" stroke-width="3.4" stroke-linejoin="round"/><polygon points="1186,207 1205,211 1203,218 1188,218" fill="#5ebcd8" stroke="#5ebcd8" stroke-width="3.4" stroke-linejoin="round"/><polygon points="720,386 724,387 711,427 708,427" fill="#d0b040" stroke="#d0b040" stroke-width="3.4" stroke-linejoin="round"/><polygon points="1079,556 1083,555 1083,562 1080,562" fill="#3a80e0" stroke="#3a80e0" stroke-width="3.4" stroke-linejoin="round"/><polygon points="1319,753 1359,736 1354,764 1323,760" fill="#e0c050" stroke="#e0c050" stroke-width="3.4" stroke-linejoin="round"/><polygon points="1312,745 1320,745 1321,755 1313,756" fill="#70e0b0" stroke="#70e0b0" stroke-width="3.4" stroke-linejoin="round"/><polygon points="879,531 883,531 883,534 879,534" fill="#c06040" stroke="#c06040" stroke-width="3.4" stroke-linejoin="round"/><polygon points="885,532 888,532 888,535 885,535" fill="#c06040" stroke="#c06040" stroke-width="3.4" stroke-linejoin="round"/><polygon points="890,543 894,543 894,546 890,546" fill="#c06040" stroke="#c06040" stroke-width="3.4" stroke-linejoin="round"/><polygon points="922,597 925,597 925,600 922,600" fill="#c06040" stroke="#c06040" stroke-width="3.4" stroke-linejoin="round"/><polygon points="909,625 912,624 912,628" fill="#60d080" stroke="#60d080" stroke-width="3.4" stroke-linejoin="round"/><polygon points="916,630 919,629 920,633" fill="#60d080" stroke="#60d080" stroke-width="3.4" stroke-linejoin="round"/><polygon points="931,631 935,629 935,635" fill="#60d080" stroke="#60d080" stroke-width="3.4" stroke-linejoin="round"/><polygon points="848,688 851,688 851,691 848,691" fill="#c06040" stroke="#c06040" stroke-width="3.4" stroke-linejoin="round"/><polygon points="1420,268 1426,272 1424,280 1418,276" fill="#8040e0" stroke="#8040e0" stroke-width="3.4" stroke-linejoin="round"/><polygon points="900,749 912,750 912,756 902,756" fill="#a0d040" stroke="#a0d040" stroke-width="3.4" stroke-linejoin="round"/><clipPath id="sc0"><polygon points="835,313 865,289 891,262 908,251 929,247 921,259 908,270 895,289 880,298 855,306 840,315"/></clipPath><polygon points="835,313 865,289 891,262 908,251 929,247 921,259 908,270 895,289 880,298 855,306 840,315" fill="#5a9bdd"/><g clip-path="url(#sc0)"><polygon points="835,313 865,289 891,262 908,251 929,247 921,259 908,270 895,289 880,298 855,306 840,315" fill="none" stroke="#1a3a6a" stroke-width="22" opacity="0.6" filter="url(#hD)"/><polygon points="835,313 865,289 891,262 908,251 929,247 921,259 908,270 895,289 880,298 855,306 840,315" fill="none" stroke="#94a6bc" stroke-width="9" filter="url(#hL)"/></g><polygon points="835,313 865,289 891,262 908,251 929,247 921,259 908,270 895,289 880,298 855,306 840,315" fill="none" stroke="#7a7a78" stroke-width="0.9"/><clipPath id="sc1"><polygon points="884,316 899,302 920,281 940,264 961,251 982,240 989,247 965,264 942,281 912,306 895,319"/></clipPath><polygon points="884,316 899,302 920,281 940,264 961,251 982,240 989,247 965,264 942,281 912,306 895,319" fill="#5a9bdd"/><g clip-path="url(#sc1)"><polygon points="884,316 899,302 920,281 940,264 961,251 982,240 989,247 965,264 942,281 912,306 895,319" fill="none" stroke="#1a3a6a" stroke-width="22" opacity="0.6" filter="url(#hD)"/><polygon points="884,316 899,302 920,281 940,264 961,251 982,240 989,247 965,264 942,281 912,306 895,319" fill="none" stroke="#94a6bc" stroke-width="9" filter="url(#hL)"/></g><polygon points="884,316 899,302 920,281 940,264 961,251 982,240 989,247 965,264 942,281 912,306 895,319" fill="none" stroke="#7a7a78" stroke-width="0.9"/><clipPath id="sc2"><polygon points="958,236 985,222 1012,214 1040,210 1042,214 1015,219 990,227 960,241"/></clipPath><polygon points="958,236 985,222 1012,214 1040,210 1042,214 1015,219 990,227 960,241" fill="#5a9bdd"/><g clip-path="url(#sc2)"><polygon points="958,236 985,222 1012,214 1040,210 1042,214 1015,219 990,227 960,241" fill="none" stroke="#1a3a6a" stroke-width="22" opacity="0.6" filter="url(#hD)"/><polygon points="958,236 985,222 1012,214 1040,210 1042,214 1015,219 990,227 960,241" fill="none" stroke="#94a6bc" stroke-width="9" filter="url(#hL)"/></g><polygon points="958,236 985,222 1012,214 1040,210 1042,214 1015,219 990,227 960,241" fill="none" stroke="#7a7a78" stroke-width="0.9"/><clipPath id="sc3"><polygon points="990,246 1020,236 1050,226 1053,230 1022,241 993,250"/></clipPath><polygon points="990,246 1020,236 1050,226 1053,230 1022,241 993,250" fill="#5a9bdd"/><g clip-path="url(#sc3)"><polygon points="990,246 1020,236 1050,226 1053,230 1022,241 993,250" fill="none" stroke="#1a3a6a" stroke-width="22" opacity="0.6" filter="url(#hD)"/><polygon points="990,246 1020,236 1050,226 1053,230 1022,241 993,250" fill="none" stroke="#94a6bc" stroke-width="9" filter="url(#hL)"/></g><polygon points="990,246 1020,236 1050,226 1053,230 1022,241 993,250" fill="none" stroke="#7a7a78" stroke-width="0.9"/><clipPath id="sc4"><polygon points="1000,200 1008,218 1004,240 1000,238 1003,218 996,202"/></clipPath><polygon points="1000,200 1008,218 1004,240 1000,238 1003,218 996,202" fill="#5a9bdd"/><g clip-path="url(#sc4)"><polygon points="1000,200 1008,218 1004,240 1000,238 1003,218 996,202" fill="none" stroke="#1a3a6a" stroke-width="22" opacity="0.6" filter="url(#hD)"/><polygon points="1000,200 1008,218 1004,240 1000,238 1003,218 996,202" fill="none" stroke="#94a6bc" stroke-width="9" filter="url(#hL)"/></g><polygon points="1000,200 1008,218 1004,240 1000,238 1003,218 996,202" fill="none" stroke="#7a7a78" stroke-width="0.9"/><clipPath id="sc5"><polygon points="1025,205 1030,225 1028,250 1024,250 1026,225 1021,206"/></clipPath><polygon points="1025,205 1030,225 1028,250 1024,250 1026,225 1021,206" fill="#5a9bdd"/><g clip-path="url(#sc5)"><polygon points="1025,205 1030,225 1028,250 1024,250 1026,225 1021,206" fill="none" stroke="#1a3a6a" stroke-width="22" opacity="0.6" filter="url(#hD)"/><polygon points="1025,205 1030,225 1028,250 1024,250 1026,225 1021,206" fill="none" stroke="#94a6bc" stroke-width="9" filter="url(#hL)"/></g><polygon points="1025,205 1030,225 1028,250 1024,250 1026,225 1021,206" fill="none" stroke="#7a7a78" stroke-width="0.9"/><clipPath id="sc6"><polygon points="940,270 960,262 985,256 987,260 962,266 942,275"/></clipPath><polygon points="940,270 960,262 985,256 987,260 962,266 942,275" fill="#5a9bdd"/><g clip-path="url(#sc6)"><polygon points="940,270 960,262 985,256 987,260 962,266 942,275" fill="none" stroke="#1a3a6a" stroke-width="22" opacity="0.6" filter="url(#hD)"/><polygon points="940,270 960,262 985,256 987,260 962,266 942,275" fill="none" stroke="#94a6bc" stroke-width="9" filter="url(#hL)"/></g><polygon points="940,270 960,262 985,256 987,260 962,266 942,275" fill="none" stroke="#7a7a78" stroke-width="0.9"/><clipPath id="sc7"><polygon points="965,250 975,245 978,262 970,268"/></clipPath><polygon points="965,250 975,245 978,262 970,268" fill="#5a9bdd"/><g clip-path="url(#sc7)"><polygon points="965,250 975,245 978,262 970,268" fill="none" stroke="#1a3a6a" stroke-width="22" opacity="0.6" filter="url(#hD)"/><polygon points="965,250 975,245 978,262 970,268" fill="none" stroke="#94a6bc" stroke-width="9" filter="url(#hL)"/></g><polygon points="965,250 975,245 978,262 970,268" fill="none" stroke="#7a7a78" stroke-width="0.9"/><clipPath id="sc8"><polygon points="1035,240 1045,236 1048,250 1038,252"/></clipPath><polygon points="1035,240 1045,236 1048,250 1038,252" fill="#5a9bdd"/><g clip-path="url(#sc8)"><polygon points="1035,240 1045,236 1048,250 1038,252" fill="none" stroke="#1a3a6a" stroke-width="22" opacity="0.6" filter="url(#hD)"/><polygon points="1035,240 1045,236 1048,250 1038,252" fill="none" stroke="#94a6bc" stroke-width="9" filter="url(#hL)"/></g><polygon points="1035,240 1045,236 1048,250 1038,252" fill="none" stroke="#7a7a78" stroke-width="0.9"/><clipPath id="sc9"><polygon points="814,362 833,366 848,374 833,383 823,383"/></clipPath><polygon points="814,362 833,366 848,374 833,383 823,383" fill="#5a9bdd"/><g clip-path="url(#sc9)"><polygon points="814,362 833,366 848,374 833,383 823,383" fill="none" stroke="#1a3a6a" stroke-width="22" opacity="0.6" filter="url(#hD)"/><polygon points="814,362 833,366 848,374 833,383 823,383" fill="none" stroke="#94a6bc" stroke-width="9" filter="url(#hL)"/></g><polygon points="814,362 833,366 848,374 833,383 823,383" fill="none" stroke="#7a7a78" stroke-width="0.9"/><clipPath id="sc10"><polygon points="1170,372 1185,368 1195,378 1190,388 1178,388"/></clipPath><polygon points="1170,372 1185,368 1195,378 1190,388 1178,388" fill="#5a9bdd"/><g clip-path="url(#sc10)"><polygon points="1170,372 1185,368 1195,378 1190,388 1178,388" fill="none" stroke="#1a3a6a" stroke-width="22" opacity="0.6" filter="url(#hD)"/><polygon points="1170,372 1185,368 1195,378 1190,388 1178,388" fill="none" stroke="#94a6bc" stroke-width="9" filter="url(#hL)"/></g><polygon points="1170,372 1185,368 1195,378 1190,388 1178,388" fill="none" stroke="#7a7a78" stroke-width="0.9"/><clipPath id="sc11"><polygon points="1196,527 1210,522 1220,527 1235,520 1252,522 1262,530 1258,545 1238,548 1210,552 1195,550"/></clipPath><polygon points="1196,527 1210,522 1220,527 1235,520 1252,522 1262,530 1258,545 1238,548 1210,552 1195,550" fill="#5a9bdd"/><g clip-path="url(#sc11)"><polygon points="1196,527 1210,522 1220,527 1235,520 1252,522 1262,530 1258,545 1238,548 1210,552 1195,550" fill="none" stroke="#1a3a6a" stroke-width="22" opacity="0.6" filter="url(#hD)"/><polygon points="1196,527 1210,522 1220,527 1235,520 1252,522 1262,530 1258,545 1238,548 1210,552 1195,550" fill="none" stroke="#94a6bc" stroke-width="9" filter="url(#hL)"/></g><polygon points="1196,527 1210,522 1220,527 1235,520 1252,522 1262,530 1258,545 1238,548 1210,552 1195,550" fill="none" stroke="#7a7a78" stroke-width="0.9"/><clipPath id="sc12"><polygon points="1278,482 1298,478 1305,500 1320,522 1327,528 1334,546 1322,551 1308,539 1298,533 1290,528 1292,510 1282,500"/></clipPath><polygon points="1278,482 1298,478 1305,500 1320,522 1327,528 1334,546 1322,551 1308,539 1298,533 1290,528 1292,510 1282,500" fill="#5a9bdd"/><g clip-path="url(#sc12)"><polygon points="1278,482 1298,478 1305,500 1320,522 1327,528 1334,546 1322,551 1308,539 1298,533 1290,528 1292,510 1282,500" fill="none" stroke="#1a3a6a" stroke-width="22" opacity="0.6" filter="url(#hD)"/><polygon points="1278,482 1298,478 1305,500 1320,522 1327,528 1334,546 1322,551 1308,539 1298,533 1290,528 1292,510 1282,500" fill="none" stroke="#94a6bc" stroke-width="9" filter="url(#hL)"/></g><polygon points="1278,482 1298,478 1305,500 1320,522 1327,528 1334,546 1322,551 1308,539 1298,533 1290,528 1292,510 1282,500" fill="none" stroke="#7a7a78" stroke-width="0.9"/><clipPath id="sc13"><polygon points="1236,629 1250,640 1262,660 1278,690 1300,720 1320,744 1315,748 1290,735 1270,705 1255,680 1240,650"/></clipPath><polygon points="1236,629 1250,640 1262,660 1278,690 1300,720 1320,744 1315,748 1290,735 1270,705 1255,680 1240,650" fill="#5a9bdd"/><g clip-path="url(#sc13)"><polygon points="1236,629 1250,640 1262,660 1278,690 1300,720 1320,744 1315,748 1290,735 1270,705 1255,680 1240,650" fill="none" stroke="#1a3a6a" stroke-width="22" opacity="0.6" filter="url(#hD)"/><polygon points="1236,629 1250,640 1262,660 1278,690 1300,720 1320,744 1315,748 1290,735 1270,705 1255,680 1240,650" fill="none" stroke="#94a6bc" stroke-width="9" filter="url(#hL)"/></g><polygon points="1236,629 1250,640 1262,660 1278,690 1300,720 1320,744 1315,748 1290,735 1270,705 1255,680 1240,650" fill="none" stroke="#7a7a78" stroke-width="0.9"/><clipPath id="sc14"><polygon points="1318,596 1340,612 1362,628 1358,640 1335,628 1324,612"/></clipPath><polygon points="1318,596 1340,612 1362,628 1358,640 1335,628 1324,612" fill="#5a9bdd"/><g clip-path="url(#sc14)"><polygon points="1318,596 1340,612 1362,628 1358,640 1335,628 1324,612" fill="none" stroke="#1a3a6a" stroke-width="22" opacity="0.6" filter="url(#hD)"/><polygon points="1318,596 1340,612 1362,628 1358,640 1335,628 1324,612" fill="none" stroke="#94a6bc" stroke-width="9" filter="url(#hL)"/></g><polygon points="1318,596 1340,612 1362,628 1358,640 1335,628 1324,612" fill="none" stroke="#7a7a78" stroke-width="0.9"/></g><ellipse cx="1112.3" cy="252.3" rx="48" ry="30" fill="#1e3050" opacity="0.5" filter="url(#hD)"/><ellipse cx="1109.3" cy="248.3" rx="48" ry="30" fill="#fff"/><g font-family="Liberation Sans, sans-serif" font-size="16.5" text-anchor="middle" dominant-baseline="central"><text x="937.8" y="215" transform="rotate(-33 937.8 215)" stroke="#fff" stroke-width="5" stroke-linejoin="round" paint-order="stroke" fill="#000">Canada</text><text x="729.4" y="370.6" transform="rotate(-52 729.4 370.6)" stroke="#fff" stroke-width="5" stroke-linejoin="round" paint-order="stroke" fill="#000">United</text><text x="746" y="384.4" transform="rotate(-55 746 384.4)" stroke="#fff" stroke-width="5" stroke-linejoin="round" paint-order="stroke" fill="#000">States</text><text x="754.4" y="406.7" transform="rotate(-55 754.4 406.7)" stroke="#fff" stroke-width="5" stroke-linejoin="round" paint-order="stroke" fill="#000">of</text><text x="783.6" y="404" transform="rotate(-55 783.6 404)" stroke="#fff" stroke-width="5" stroke-linejoin="round" paint-order="stroke" fill="#000">America</text><text x="1028" y="290" transform="rotate(-43 1028 290)" stroke="#fff" stroke-width="5" stroke-linejoin="round" paint-order="stroke" fill="#000">Greenland</text><text x="1010" y="376" transform="rotate(21 1010 376)" stroke="#fff" stroke-width="5" stroke-linejoin="round" paint-order="stroke" fill="#000">Iceland</text><text x="1088" y="407" transform="rotate(-60 1088 407)" stroke="#fff" stroke-width="5" stroke-linejoin="round" paint-order="stroke" fill="#000">Norway</text><text x="1146" y="390" transform="rotate(62 1146 390)" stroke="#fff" stroke-width="5" stroke-linejoin="round" paint-order="stroke" fill="#000">Finland</text><text x="1314" y="327.5" transform="rotate(0 1314 327.5)" stroke="#fff" stroke-width="5" stroke-linejoin="round" paint-order="stroke" fill="#000">Russia</text><text x="1354.4" y="231.7" transform="rotate(35 1354.4 231.7)" stroke="#fff" stroke-width="5" stroke-linejoin="round" paint-order="stroke" fill="#000">Japan</text><text x="1417" y="273" transform="rotate(43 1417 273)" stroke="#fff" stroke-width="5" stroke-linejoin="round" paint-order="stroke" fill="#000">North</text><text x="1403" y="290" transform="rotate(45 1403 290)" stroke="#fff" stroke-width="5" stroke-linejoin="round" paint-order="stroke" fill="#000">Korea</text><text x="1404.4" y="345.6" transform="rotate(79 1404.4 345.6)" stroke="#fff" stroke-width="5" stroke-linejoin="round" paint-order="stroke" fill="#000">Mongolia</text><text x="1487.8" y="376" transform="rotate(63 1487.8 376)" stroke="#fff" stroke-width="5" stroke-linejoin="round" paint-order="stroke" fill="#000">Taiwan</text><text x="1457" y="406.7" transform="rotate(-30 1457 406.7)" stroke="#fff" stroke-width="5" stroke-linejoin="round" paint-order="stroke" fill="#000">China</text><text x="1334" y="438" transform="rotate(-58 1334 438)" stroke="#fff" stroke-width="5" stroke-linejoin="round" paint-order="stroke" fill="#000">Kazakhstan</text><text x="1393" y="462" transform="rotate(-80 1393 462)" stroke="#fff" stroke-width="5" stroke-linejoin="round" paint-order="stroke" fill="#000">Kyrgyzstan</text><text x="1418" y="487" transform="rotate(-88 1418 487)" stroke="#fff" stroke-width="5" stroke-linejoin="round" paint-order="stroke" fill="#000">Siachen</text><text x="1438" y="490" transform="rotate(-88 1438 490)" stroke="#fff" stroke-width="5" stroke-linejoin="round" paint-order="stroke" fill="#000">Glacier</text><text x="1510" y="445" transform="rotate(73 1510 445)" stroke="#fff" stroke-width="5" stroke-linejoin="round" paint-order="stroke" fill="#000">Vietnam</text><text x="1470" y="505" transform="rotate(-25 1470 505)" stroke="#fff" stroke-width="5" stroke-linejoin="round" paint-order="stroke" fill="#000">Nepal</text><text x="1512" y="519" transform="rotate(66 1512 519)" stroke="#fff" stroke-width="5" stroke-linejoin="round" paint-order="stroke" fill="#000">Myanmar</text><text x="1349" y="520.6" transform="rotate(14 1349 520.6)" stroke="#fff" stroke-width="5" stroke-linejoin="round" paint-order="stroke" fill="#000">Turkmenistan</text><text x="1296" y="537" transform="rotate(39 1296 537)" stroke="#fff" stroke-width="5" stroke-linejoin="round" paint-order="stroke" fill="#000">Azerbaijan</text><text x="1346" y="577.5" transform="rotate(-35 1346 577.5)" stroke="#fff" stroke-width="5" stroke-linejoin="round" paint-order="stroke" fill="#000">Iran</text><text x="1468" y="559.4" transform="rotate(-5 1468 559.4)" stroke="#fff" stroke-width="5" stroke-linejoin="round" paint-order="stroke" fill="#000">India</text><text x="1542" y="590" transform="rotate(-88 1542 590)" stroke="#fff" stroke-width="5" stroke-linejoin="round" paint-order="stroke" fill="#000">Indonesia</text><text x="1415.6" y="587" transform="rotate(85 1415.6 587)" stroke="#fff" stroke-width="5" stroke-linejoin="round" paint-order="stroke" fill="#000">Pakistan</text><text x="1297.5" y="595.6" transform="rotate(25 1297.5 595.6)" stroke="#fff" stroke-width="5" stroke-linejoin="round" paint-order="stroke" fill="#000">Iraq</text><text x="1347.5" y="634.4" transform="rotate(62 1347.5 634.4)" stroke="#fff" stroke-width="5" stroke-linejoin="round" paint-order="stroke" fill="#000">Qatar</text><text x="1300" y="652.5" transform="rotate(40 1300 652.5)" stroke="#fff" stroke-width="5" stroke-linejoin="round" paint-order="stroke" fill="#000">Saudi</text><text x="1287.8" y="674.7" transform="rotate(45 1287.8 674.7)" stroke="#fff" stroke-width="5" stroke-linejoin="round" paint-order="stroke" fill="#000">Arabia</text><text x="1394.7" y="659.4" transform="rotate(-82 1394.7 659.4)" stroke="#fff" stroke-width="5" stroke-linejoin="round" paint-order="stroke" fill="#000">Oman</text><text x="1517" y="634.4" transform="rotate(78 1517 634.4)" stroke="#fff" stroke-width="5" stroke-linejoin="round" paint-order="stroke" fill="#000">Sri</text><text x="1497.5" y="648" transform="rotate(73 1497.5 648)" stroke="#fff" stroke-width="5" stroke-linejoin="round" paint-order="stroke" fill="#000">Lanka</text><text x="1349" y="717.8" transform="rotate(-33 1349 717.8)" stroke="#fff" stroke-width="5" stroke-linejoin="round" paint-order="stroke" fill="#000">Yemen</text><text x="1282" y="733" transform="rotate(38 1282 733)" stroke="#fff" stroke-width="5" stroke-linejoin="round" paint-order="stroke" fill="#000">Eritrea</text><text x="1011.4" y="472" transform="rotate(85 1011.4 472)" stroke="#fff" stroke-width="5" stroke-linejoin="round" paint-order="stroke" fill="#000">Ireland</text><text x="1088" y="462" transform="rotate(-62 1088 462)" stroke="#fff" stroke-width="5" stroke-linejoin="round" paint-order="stroke" fill="#000">Denmark</text><text x="1154.4" y="445.6" transform="rotate(0 1154.4 445.6)" stroke="#fff" stroke-width="5" stroke-linejoin="round" paint-order="stroke" fill="#000">Latvia</text><text x="1146" y="484.4" transform="rotate(5 1146 484.4)" stroke="#fff" stroke-width="5" stroke-linejoin="round" paint-order="stroke" fill="#000">Poland</text><text x="1203" y="501" transform="rotate(22 1203 501)" stroke="#fff" stroke-width="5" stroke-linejoin="round" paint-order="stroke" fill="#000">Ukraine</text><text x="1104.4" y="494" transform="rotate(-72 1104.4 494)" stroke="#fff" stroke-width="5" stroke-linejoin="round" paint-order="stroke" fill="#000">Germany</text><text x="1051.7" y="520.6" transform="rotate(70 1051.7 520.6)" stroke="#fff" stroke-width="5" stroke-linejoin="round" paint-order="stroke" fill="#000">France</text><text x="1107" y="549.7" transform="rotate(55 1107 549.7)" stroke="#fff" stroke-width="5" stroke-linejoin="round" paint-order="stroke" fill="#000">Italy</text><text x="1175" y="549.7" transform="rotate(-5 1175 549.7)" stroke="#fff" stroke-width="5" stroke-linejoin="round" paint-order="stroke" fill="#000">Bulgaria</text><text x="1028.9" y="563.6" transform="rotate(0 1028.9 563.6)" stroke="#fff" stroke-width="5" stroke-linejoin="round" paint-order="stroke" fill="#000">Spain</text><text x="986.4" y="563.6" transform="rotate(-65 986.4 563.6)" stroke="#fff" stroke-width="5" stroke-linejoin="round" paint-order="stroke" fill="#000">Portugal</text><text x="1211.4" y="573.3" transform="rotate(-15 1211.4 573.3)" stroke="#fff" stroke-width="5" stroke-linejoin="round" paint-order="stroke" fill="#000">Turkey</text><text x="1228" y="601" transform="rotate(-10 1228 601)" stroke="#fff" stroke-width="5" stroke-linejoin="round" paint-order="stroke" fill="#000">Cyprus</text><text x="1082" y="609.4" transform="rotate(80 1082 609.4)" stroke="#fff" stroke-width="5" stroke-linejoin="round" paint-order="stroke" fill="#000">Tunisia</text><text x="984" y="623" transform="rotate(-33 984 623)" stroke="#fff" stroke-width="5" stroke-linejoin="round" paint-order="stroke" fill="#000">Morocco</text><text x="1256" y="631.7" transform="rotate(88 1256 631.7)" stroke="#fff" stroke-width="5" stroke-linejoin="round" paint-order="stroke" fill="#000">Jordan</text><text x="1048" y="658" transform="rotate(-38 1048 658)" stroke="#fff" stroke-width="5" stroke-linejoin="round" paint-order="stroke" fill="#000">Algeria</text><text x="1154.4" y="674.7" transform="rotate(0 1154.4 674.7)" stroke="#fff" stroke-width="5" stroke-linejoin="round" paint-order="stroke" fill="#000">Libya</text><text x="1226" y="674.7" transform="rotate(-10 1226 674.7)" stroke="#fff" stroke-width="5" stroke-linejoin="round" paint-order="stroke" fill="#000">Egypt</text><text x="1007" y="727.5" transform="rotate(0 1007 727.5)" stroke="#fff" stroke-width="5" stroke-linejoin="round" paint-order="stroke" fill="#000">Mali</text><text x="1093" y="739" transform="rotate(-25 1093 739)" stroke="#fff" stroke-width="5" stroke-linejoin="round" paint-order="stroke" fill="#000">Niger</text><text x="1226.7" y="734" transform="rotate(-5 1226.7 734)" stroke="#fff" stroke-width="5" stroke-linejoin="round" paint-order="stroke" fill="#000">Sudan</text><text x="951.7" y="695.6" transform="rotate(-82 951.7 695.6)" stroke="#fff" stroke-width="5" stroke-linejoin="round" paint-order="stroke" fill="#000">Mauritania</text><text x="844.7" y="708" transform="rotate(-82 844.7 708)" stroke="#fff" stroke-width="5" stroke-linejoin="round" paint-order="stroke" fill="#000">Cape</text><text x="865.6" y="706.7" transform="rotate(-82 865.6 706.7)" stroke="#fff" stroke-width="5" stroke-linejoin="round" paint-order="stroke" fill="#000">Verde</text><text x="905.8" y="738.6" transform="rotate(15 905.8 738.6)" stroke="#fff" stroke-width="5" stroke-linejoin="round" paint-order="stroke" fill="#000">Guinea</text><text x="897.5" y="758" transform="rotate(17 897.5 758)" stroke="#fff" stroke-width="5" stroke-linejoin="round" paint-order="stroke" fill="#000">Bissau</text><text x="948.9" y="805.3" transform="rotate(55 948.9 805.3)" stroke="#fff" stroke-width="5" stroke-linejoin="round" paint-order="stroke" fill="#000">Liberia</text><text x="997.5" y="807" transform="rotate(82 997.5 807)" stroke="#fff" stroke-width="5" stroke-linejoin="round" paint-order="stroke" fill="#000">Ghana</text><text x="701.7" y="659.4" transform="rotate(75 701.7 659.4)" stroke="#fff" stroke-width="5" stroke-linejoin="round" paint-order="stroke" fill="#000">Suriname</text><text x="692" y="720.6" transform="rotate(63 692 720.6)" stroke="#fff" stroke-width="5" stroke-linejoin="round" paint-order="stroke" fill="#000">Bolivia</text><text x="744.7" y="784.4" transform="rotate(62 744.7 784.4)" stroke="#fff" stroke-width="5" stroke-linejoin="round" paint-order="stroke" fill="#000">Brazil</text><text x="726.7" y="801" transform="rotate(62 726.7 801)" stroke="#fff" stroke-width="5" stroke-linejoin="round" paint-order="stroke" fill="#000">Paraguay</text><text x="676.7" y="597.8" transform="rotate(-85 676.7 597.8)" stroke="#fff" stroke-width="5" stroke-linejoin="round" paint-order="stroke" fill="#000">Colombia</text><text x="678.9" y="522" transform="rotate(-80 678.9 522)" stroke="#fff" stroke-width="5" stroke-linejoin="round" paint-order="stroke" fill="#000">Panama</text><text x="703.3" y="566.7" transform="rotate(-80 703.3 566.7)" stroke="#fff" stroke-width="5" stroke-linejoin="round" paint-order="stroke" fill="#000">Dominica</text><text x="700" y="471" transform="rotate(-78 700 471)" stroke="#fff" stroke-width="5" stroke-linejoin="round" paint-order="stroke" fill="#000">Cuba</text><text x="1147.5" y="759.4" transform="rotate(8 1147.5 759.4)" stroke="#fff" stroke-width="5" stroke-linejoin="round" paint-order="stroke" fill="#000">Chad</text><text x="1182" y="783" transform="rotate(-15 1182 783)" stroke="#fff" stroke-width="5" stroke-linejoin="round" paint-order="stroke" fill="#000">Central</text><text x="1187.8" y="803.9" transform="rotate(-15 1187.8 803.9)" stroke="#fff" stroke-width="5" stroke-linejoin="round" paint-order="stroke" fill="#000">African</text><text x="1198.9" y="819" transform="rotate(-18 1198.9 819)" stroke="#fff" stroke-width="5" stroke-linejoin="round" paint-order="stroke" fill="#000">Republic</text><text x="1025" y="794" transform="rotate(78 1025 794)" stroke="#fff" stroke-width="5" stroke-linejoin="round" paint-order="stroke" fill="#000">Benin</text><text x="1072.5" y="798.3" transform="rotate(5 1072.5 798.3)" stroke="#fff" stroke-width="5" stroke-linejoin="round" paint-order="stroke" fill="#000">Nigeria</text><text x="1248" y="835" transform="rotate(-25 1248 835)" stroke="#fff" stroke-width="5" stroke-linejoin="round" paint-order="stroke" fill="#000">Uganda</text><text x="1103" y="851" transform="rotate(-60 1103 851)" stroke="#fff" stroke-width="5" stroke-linejoin="round" paint-order="stroke" fill="#000">Republic</text><text x="1111" y="881.7" transform="rotate(-60 1111 881.7)" stroke="#fff" stroke-width="5" stroke-linejoin="round" paint-order="stroke" fill="#000">of</text><text x="1136" y="877.5" transform="rotate(-62 1136 877.5)" stroke="#fff" stroke-width="5" stroke-linejoin="round" paint-order="stroke" fill="#000">Congo</text><text x="1232" y="866.4" transform="rotate(-25 1232 866.4)" stroke="#fff" stroke-width="5" stroke-linejoin="round" paint-order="stroke" fill="#000">Burundi</text><text x="1131.4" y="921" transform="rotate(5 1131.4 921)" stroke="#fff" stroke-width="5" stroke-linejoin="round" paint-order="stroke" fill="#000">Angola</text><text x="1212.8" y="922" transform="rotate(-25 1212.8 922)" stroke="#fff" stroke-width="5" stroke-linejoin="round" paint-order="stroke" fill="#000">Zambia</text><text x="1267" y="926" transform="rotate(-35 1267 926)" stroke="#fff" stroke-width="5" stroke-linejoin="round" paint-order="stroke" fill="#000">Mozambique</text><text x="1115.6" y="969" transform="rotate(3 1115.6 969)" stroke="#fff" stroke-width="5" stroke-linejoin="round" paint-order="stroke" fill="#000">Namibia</text><text x="1185" y="962" transform="rotate(-15 1185 962)" stroke="#fff" stroke-width="5" stroke-linejoin="round" paint-order="stroke" fill="#000">Botswana</text><text x="1204.4" y="985.8" transform="rotate(-28 1204.4 985.8)" stroke="#fff" stroke-width="5" stroke-linejoin="round" paint-order="stroke" fill="#000">Lesotho</text><text x="1319.7" y="788.6" transform="rotate(25 1319.7 788.6)" stroke="#fff" stroke-width="5" stroke-linejoin="round" paint-order="stroke" fill="#000">Ethiopia</text><text x="1298.9" y="830.3" transform="rotate(-80 1298.9 830.3)" stroke="#fff" stroke-width="5" stroke-linejoin="round" paint-order="stroke" fill="#000">Kenya</text><text x="1335" y="909.4" transform="rotate(-55 1335 909.4)" stroke="#fff" stroke-width="5" stroke-linejoin="round" paint-order="stroke" fill="#000">Madagascar</text><text x="1393.3" y="890" transform="rotate(-52 1393.3 890)" stroke="#fff" stroke-width="5" stroke-linejoin="round" paint-order="stroke" fill="#000">Mauritius</text></g></g></svg>
</body></html>
